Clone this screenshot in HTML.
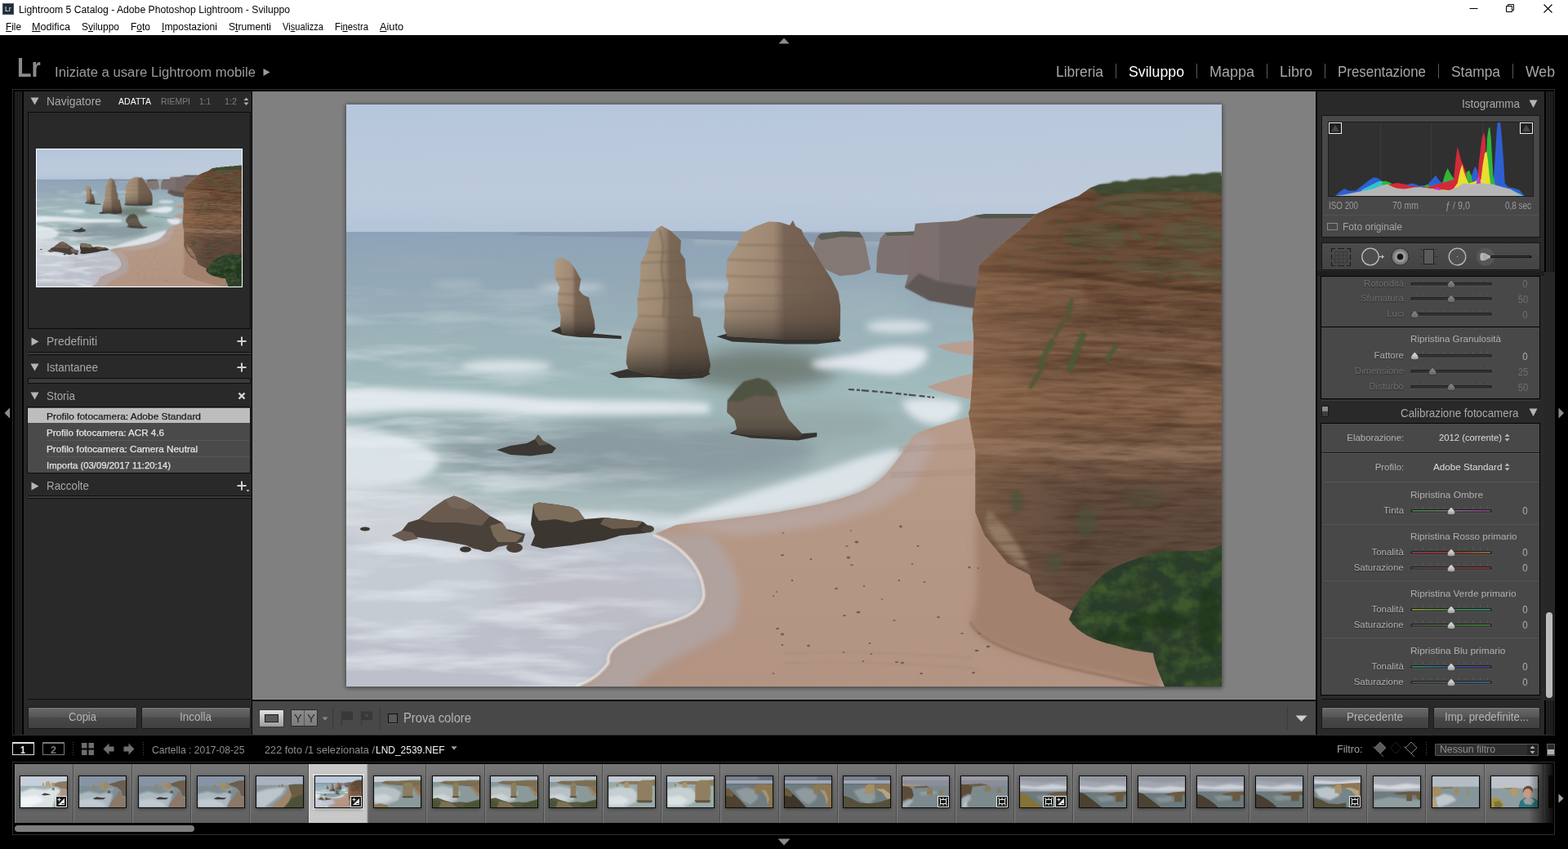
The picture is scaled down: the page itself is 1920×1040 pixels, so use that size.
<!DOCTYPE html>
<html lang="it"><head><meta charset="utf-8"><title>Lightroom 5 Catalog - Adobe Photoshop Lightroom - Sviluppo</title>
<style>
html,body{margin:0;padding:0;background:#000;}
body{width:1920px;height:1040px;position:relative;overflow:hidden;font-family:"Liberation Sans","DejaVu Sans",sans-serif;-webkit-font-smoothing:antialiased;}
span{display:block}
.abs{position:absolute}
</style></head><body>
<svg width="0" height="0" style="position:absolute">
<defs>
<linearGradient id="gSky" x1="0" y1="128" x2="0" y2="290" gradientUnits="userSpaceOnUse"><stop offset="0" stop-color="#b6c6db"/><stop offset=".7" stop-color="#bccadb"/><stop offset="1" stop-color="#b3c4d8"/></linearGradient>
<linearGradient id="gSkyR" x1="424" y1="0" x2="1496" y2="0" gradientUnits="userSpaceOnUse"><stop offset="0" stop-color="#c8d2dc" stop-opacity="0"/><stop offset=".55" stop-color="#c8d2dc" stop-opacity=".08"/><stop offset="1" stop-color="#c8d2dc" stop-opacity=".15"/></linearGradient>
<linearGradient id="gSea" x1="0" y1="284" x2="0" y2="841" gradientUnits="userSpaceOnUse"><stop offset="0" stop-color="#8ea3b8"/><stop offset=".12" stop-color="#94a9b6"/><stop offset=".25" stop-color="#9cb4ba"/><stop offset=".34" stop-color="#a0babc"/><stop offset=".45" stop-color="#9eb5b6"/><stop offset=".6" stop-color="#a8babc"/><stop offset=".8" stop-color="#bac5ca"/><stop offset="1" stop-color="#c4c9d0"/></linearGradient>
<linearGradient id="gSand" x1="0" y1="420" x2="0" y2="841" gradientUnits="userSpaceOnUse"><stop offset="0" stop-color="#bb9e8e"/><stop offset=".5" stop-color="#b69886"/><stop offset="1" stop-color="#b39483"/></linearGradient>
<linearGradient id="gCliff" x1="0" y1="220" x2="0" y2="800" gradientUnits="userSpaceOnUse"><stop offset="0" stop-color="#6c4e38"/><stop offset=".2" stop-color="#6e503a"/><stop offset=".235" stop-color="#7a5a44"/><stop offset=".34" stop-color="#6a4e3c"/><stop offset=".48" stop-color="#86644b"/><stop offset=".6" stop-color="#705645"/><stop offset=".8" stop-color="#624e40"/><stop offset="1" stop-color="#685242"/></linearGradient>
<linearGradient id="gCliffL" x1="1186" y1="0" x2="1320" y2="0" gradientUnits="userSpaceOnUse"><stop offset="0" stop-color="#a07858" stop-opacity=".42"/><stop offset=".5" stop-color="#a07858" stop-opacity=".2"/><stop offset="1" stop-color="#a07858" stop-opacity="0"/></linearGradient>
<linearGradient id="gSt2" x1="766" y1="0" x2="870" y2="0" gradientUnits="userSpaceOnUse">
<stop offset="0" stop-color="#b9a180"/><stop offset=".45" stop-color="#c4aa86"/><stop offset=".62" stop-color="#a88c6a"/><stop offset="1" stop-color="#b09470"/></linearGradient>
<linearGradient id="gSt3" x1="887" y1="0" x2="1030" y2="0" gradientUnits="userSpaceOnUse">
<stop offset="0" stop-color="#b49a78"/><stop offset=".4" stop-color="#c0a480"/><stop offset="1" stop-color="#a88a66"/></linearGradient>
<linearGradient id="gDark" x1="0" y1="0" x2="0" y2="1"><stop offset="0" stop-color="#000" stop-opacity="0"/><stop offset="1" stop-color="#2a2018" stop-opacity=".55"/></linearGradient>
<filter id="tb" x="-20%" y="-20%" width="140%" height="140%"><feGaussianBlur stdDeviation="1.1"/></filter>
<filter id="b1" x="-20%" y="-20%" width="140%" height="140%"><feGaussianBlur stdDeviation="1"/></filter>
<filter id="b2" x="-20%" y="-20%" width="140%" height="140%"><feGaussianBlur stdDeviation="2.5"/></filter>
<filter id="b4" x="-30%" y="-30%" width="160%" height="160%"><feGaussianBlur stdDeviation="5"/></filter>
<filter id="b8" x="-30%" y="-30%" width="160%" height="160%"><feGaussianBlur stdDeviation="10"/></filter>

<linearGradient id="gLow" x1="0" y1="0" x2="0" y2="1"><stop offset="0" stop-color="#3c342c" stop-opacity="0"/><stop offset=".6" stop-color="#3c342c" stop-opacity=".05"/><stop offset=".8" stop-color="#3c342c" stop-opacity=".3"/><stop offset=".93" stop-color="#2e2a26" stop-opacity=".62"/><stop offset="1" stop-color="#2a2622" stop-opacity=".85"/></linearGradient>
<linearGradient id="gSide" x1="0" y1="0" x2="1" y2="0"><stop offset="0" stop-color="#ffe8c4" stop-opacity=".3"/><stop offset=".42" stop-color="#ffe8c4" stop-opacity=".16"/><stop offset=".52" stop-color="#2a2018" stop-opacity=".2"/><stop offset="1" stop-color="#2a2018" stop-opacity=".3"/></linearGradient>
<filter id="fFoam" x="0" y="0" width="100%" height="100%" color-interpolation-filters="sRGB"><feTurbulence type="fractalNoise" baseFrequency="0.007 0.045" numOctaves="4" seed="11"/><feColorMatrix type="matrix" values="0 0 0 0 .92  0 0 0 0 .94  0 0 0 0 .96  3.2 0 0 0 -1.45"/><feGaussianBlur stdDeviation=".7"/></filter>
<filter id="fRock" x="0" y="0" width="100%" height="100%" color-interpolation-filters="sRGB"><feTurbulence type="fractalNoise" baseFrequency="0.02 0.16" numOctaves="4" seed="5"/><feColorMatrix type="matrix" values="0 0 0 0 .18  0 0 0 0 .1  0 0 0 0 .04  2.4 0 0 0 -1.0"/></filter>
<filter id="fRockL" x="0" y="0" width="100%" height="100%" color-interpolation-filters="sRGB"><feTurbulence type="fractalNoise" baseFrequency="0.02 0.16" numOctaves="4" seed="23"/><feColorMatrix type="matrix" values="0 0 0 0 .66  0 0 0 0 .5  0 0 0 0 .38  2.2 0 0 0 -1.05"/></filter>
<filter id="fBush" x="0" y="0" width="100%" height="100%" color-interpolation-filters="sRGB"><feTurbulence type="fractalNoise" baseFrequency="0.05 0.06" numOctaves="3" seed="8"/><feColorMatrix type="matrix" values="0 0 0 0 .27  0 0 0 0 .38  0 0 0 0 .18  2.6 0 0 0 -1.0"/></filter>
<radialGradient id="gFoamMask" cx="424" cy="800" r="600" gradientUnits="userSpaceOnUse"><stop offset="0" stop-color="#8c8c8c"/><stop offset=".45" stop-color="#8c8c8c"/><stop offset=".7" stop-color="#3a3a3a"/><stop offset="1" stop-color="#0c0c0c"/></radialGradient>
<mask id="mFoam" maskUnits="userSpaceOnUse" x="424" y="284" width="1072" height="560"><rect x="424" y="284" width="1072" height="560" fill="url(#gFoamMask)"/><rect x="424" y="284" width="1072" height="60" fill="#000" opacity=".8"/></mask>
<path id="pCliff" d="M1496,216 L1456,220 L1413,221.500 L1384,224.500 L1347,226 L1335,230 L1321,240 L1298,249 L1269,262 L1249,281 L1226,299.500 L1206,318 L1199,325.500 L1197,344 L1192.500,373 L1190.500,390 L1192.500,416 L1191,460 L1188,500 L1186,506 L1190,530 L1194.500,553 L1194.500,628 L1206,656 L1234,690 L1261,704 L1268,724 L1302,742 L1320,752 L1380,760 L1496,760Z"/>
<clipPath id="cpCliff"><use href="#pCliff"/></clipPath>
<path id="pS1" d="M680.200,317.700 L688.800,315.700 L697.500,320.600 L703.300,327.800 L709,337.900 L711.300,342.200 L709,355.200 L713.400,360.900 L721.100,364.400 L724,378.200 L727.800,392.700 L728.600,402.800 L725.800,408.500 L709,411.400 L688.800,408.500 L686,399.900 L686.800,386.900 L683.100,372.500 L683.600,359.500 L685.400,352.300 L680.800,342.200 L679,337.900 L679.600,326.300Z"/>
<path id="pS2" d="M810,276.400 L804.200,280.200 L795.500,291.700 L791.200,309 L784.600,322 L784,343.600 L780.500,366.700 L781.100,386.900 L773.900,404.200 L768.100,424.400 L766.700,444.600 L769.600,453 L795.500,459 L833,461 L867.600,458 L870,447.500 L866.200,427.300 L861.900,410 L857.500,389.800 L848.900,386.900 L847.500,360.900 L840.200,343.600 L838.800,317.700 L833,309 L833.900,294.600 L821.500,283.100Z"/>
<path id="pS3" d="M941.200,271.500 L925.300,277.300 L908.600,286 L907.400,291.700 L902.200,300.400 L890.700,317.700 L889.300,337.900 L892.200,346.500 L890.700,358 L886.400,362.400 L887.800,381.100 L886.400,401.300 L890.700,412 L962.800,416 L1026.300,415 L1028.600,410 L1029.100,375.400 L1026.300,358 L1017.600,340.700 L1006.100,323.400 L994.500,303.300 L984.400,288.800 L981.600,281.600 L974.300,277.300 L970.900,270.100 L967.100,275.900 L954.200,272.100Z"/>
<path id="pS4" d="M928.200,463.300 L910.900,467.600 L902.200,476.300 L890.700,490.700 L890.100,505.100 L899.400,513.800 L902.200,525.300 L898,531 L919.600,533 L977.200,536 L983,532.500 L965.700,513.800 L957,496.500 L951.300,479.200 L939.700,466.200Z"/>
<clipPath id="cpPhoto"><rect x="424" y="128" width="1072" height="713"/></clipPath>
</defs>
<symbol id="ph" viewBox="424 128 1072 713" preserveAspectRatio="none">
<g clip-path="url(#cpPhoto)">
<rect x="424" y="128" width="1072" height="160" fill="url(#gSky)"/>
<rect x="424" y="128" width="1072" height="160" fill="url(#gSkyR)"/>
<!-- sea -->
<rect x="424" y="284" width="1072" height="560" fill="url(#gSea)"/>
<rect x="850" y="284" width="400" height="16" fill="#aab7c0" opacity=".55" filter="url(#b2)"/>
<!-- distant headland -->
<polygon points="627,287 640,284.500 700,284.500 760,283.500 830,283 908,283.500 1010,286 1010,297 908,295 830,292 760,290.500 700,289.500 640,288.500" fill="#8898ac"/>
<!-- sea teal patches -->
<g filter="url(#b8)">
<ellipse cx="590" cy="432" rx="190" ry="34" fill="#9cb4b8" opacity=".5"/>
<ellipse cx="770" cy="555" rx="230" ry="38" fill="#88999f" opacity=".92"/>
<ellipse cx="930" cy="452" rx="95" ry="26" fill="#6e7a74" opacity=".9"/>
<ellipse cx="560" cy="525" rx="130" ry="14" fill="#98aeb2" opacity=".8"/>
<ellipse cx="1060" cy="375" rx="60" ry="26" fill="#9fb4bc" opacity=".6"/>
<ellipse cx="1010" cy="520" rx="80" ry="22" fill="#94a8a6" opacity=".8"/>
</g>
<!-- foam (soft shapes) -->
<g filter="url(#b4)" fill="#e8edf2">
<path d="M396,480 C480,474 560,478 640,486 C720,494 800,488 869,494 L869,506 C780,508 700,510 620,506 C540,500 470,504 396,510Z" opacity=".9"/>
<path d="M396,520 C470,522 520,540 537,560 C540,585 500,600 396,606Z" opacity=".8"/>
<ellipse cx="620" cy="449" rx="56" ry="8" opacity=".8"/>
<path d="M992,444 C1010,436 1040,438 1056,432 C1080,424 1110,422 1134,428 C1140,440 1130,452 1100,458 C1070,460 1050,452 1030,452 C1010,454 996,452 992,444Z" opacity=".92"/>
<path d="M1104,492 C1120,486 1150,486 1176,492 C1180,504 1170,516 1150,520 C1130,520 1112,512 1104,492Z" opacity=".88"/>
<path d="M800,648 C880,610 990,585 1050,562 C1080,552 1100,548 1110,552 C1095,585 1060,605 1000,620 C940,634 860,642 800,648Z" opacity=".8"/>
<ellipse cx="720" cy="640" rx="120" ry="12" opacity=".6"/>
<ellipse cx="700" cy="352" rx="42" ry="3.500" opacity=".65"/>
<ellipse cx="870" cy="349" rx="32" ry="3" opacity=".6"/>
<ellipse cx="560" cy="349" rx="30" ry="2.500" opacity=".45"/>
<ellipse cx="880" cy="372" rx="30" ry="3" opacity=".5"/>
<ellipse cx="1100" cy="400" rx="40" ry="8" opacity=".75"/>
</g>
<!-- bottom-left foam wash -->
<g filter="url(#b8)">
<path d="M396,600 C500,596 560,600 620,640 C700,660 800,650 850,670 C880,700 870,760 760,800 L712,872 L396,872Z" fill="#bbc0ca" opacity=".96"/>
<ellipse cx="500" cy="720" rx="120" ry="60" fill="#d6dce2" opacity=".35"/>
<ellipse cx="720" cy="740" rx="110" ry="40" fill="#bdbbc3" opacity=".6"/><ellipse cx="485" cy="630" rx="95" ry="38" fill="#dce2e8" opacity=".55"/>
</g>
<!-- textured foam streaks -->
<g mask="url(#mFoam)"><rect x="424" y="284" width="1072" height="560" filter="url(#fFoam)"/></g>
<rect x="1010" y="285" width="112" height="11" fill="#8c9cae" opacity=".9"/>
<!-- distant cliffs -->
<polygon points="996,303 999,292 1005,286 1030,283.500 1052,284 1058,292 1060,300 1066,330 1050,336 1028,338 1011,330 1000,318" fill="#847874"/>
<polygon points="1001,290 1005,286 1030,283.500 1052,284 1057,291 1030,290 1006,294" fill="#5a5e56"/>
<polygon points="1073,334 1074,310 1078,292 1084,285 1120,283.500 1122,336 1100,337" fill="#7e7270"/>
<polygon points="1084,285 1120,283.500 1121,288 1086,289" fill="#5c5e54"/>
<polygon points="1121,274 1150,272 1173,270.500 1193,264 1207,262 1269,262 1249,281 1226,299.500 1206,318 1199,325.500 1197,344 1196,378 1160,372 1138,368 1108,352 1113,334 1117,300" fill="#766a68"/>
<polygon points="1121,274 1150,272 1150,345 1138,368 1108,352 1113,334 1117,300" fill="#807472" opacity=".7"/>
<polygon points="1108,352 1125,335 1150,345 1196,352 1196,378 1160,372 1138,368" fill="#5a5250" opacity=".8" filter="url(#b1)"/>
<polygon points="1193,264 1207,262 1269,262 1262,267 1200,267.500" fill="#54544a"/>
<!-- upper beach sand -->
<path d="M1196,417 C1176,419 1160,420 1147,424 C1160,432 1180,434 1196,436Z" fill="#b89e90"/>
<path d="M1196,456 C1170,462 1150,468 1135,474 C1150,480 1170,486 1196,490Z" fill="#b89e90"/>
<!-- main sand -->
<path d="M1196,508 C1160,518 1132,525 1119,533 C1110,548 1100,562 1092,572 C1080,588 1066,598 1050,604 C1010,618 980,622 949,628 C900,636 850,640 828,643 L800,655 C840,670 862,700 862,730 C858,756 820,762 790,772 C760,785 742,795 745,812 C735,826 720,836 705,841 L1496,841 L1496,720 L1196,600Z" fill="url(#gSand)"/>
<!-- wet sand -->
<g filter="url(#b4)">
<path d="M800,655 C840,670 862,700 862,730 C858,756 820,762 790,772 C760,785 742,795 745,812 C735,826 720,836 690,866 L760,866 C790,812 850,800 895,770 C915,730 905,690 870,655Z" fill="#b0a2a0" opacity=".95"/>
<path d="M1119,533 C1100,562 1080,588 1050,604 C1010,618 980,622 949,628 L828,643 L900,656 C1000,650 1080,630 1118,595 C1130,572 1138,556 1148,536Z" fill="#b8a8a4" opacity=".8"/>
<path d="M1196,640 C1190,680 1205,720 1188,760 C1190,785 1240,800 1300,815 C1350,826 1390,834 1420,841 L1440,780 L1300,700 L1200,600Z" fill="#9f7e6a" opacity=".85"/>
</g>
<path d="M800,655 C840,670 862,700 862,730 C858,756 820,762 790,772 C760,785 742,795 745,812 C735,826 720,836 705,841" fill="none" stroke="#f4f2f0" stroke-width="2.500" opacity=".9" filter="url(#b1)"/>
<g fill="#5a4a42" opacity=".75"><ellipse cx="1037" cy="669" rx="2.1" ry="0.8"/><ellipse cx="1101" cy="711" rx="1.3" ry="1.1"/><ellipse cx="951" cy="725" rx="1.3" ry="0.8"/><ellipse cx="1067" cy="801" rx="1.4" ry="0.9"/><ellipse cx="1128" cy="825" rx="2.0" ry="1.0"/><ellipse cx="1198" cy="696" rx="1.4" ry="0.8"/><ellipse cx="1033" cy="799" rx="1.5" ry="1.1"/><ellipse cx="1132" cy="713" rx="2.0" ry="0.7"/><ellipse cx="958" cy="680" rx="2.2" ry="1.0"/><ellipse cx="1034" cy="754" rx="1.8" ry="0.9"/><ellipse cx="1178" cy="776" rx="1.5" ry="1.1"/><ellipse cx="1098" cy="811" rx="2.2" ry="0.9"/><ellipse cx="1065" cy="788" rx="1.4" ry="1.0"/><ellipse cx="952" cy="770" rx="2.3" ry="1.1"/><ellipse cx="1149" cy="756" rx="2.0" ry="1.0"/><ellipse cx="1192" cy="824" rx="1.9" ry="1.2"/><ellipse cx="958" cy="777" rx="2.1" ry="1.4"/><ellipse cx="1187" cy="695" rx="1.7" ry="1.2"/><ellipse cx="947" cy="730" rx="1.4" ry="0.8"/><ellipse cx="958" cy="790" rx="1.4" ry="0.9"/><ellipse cx="1057" cy="810" rx="1.3" ry="1.0"/><ellipse cx="1105" cy="812" rx="2.3" ry="1.3"/><ellipse cx="1024" cy="721" rx="1.7" ry="1.3"/><ellipse cx="993" cy="685" rx="1.5" ry="1.0"/><ellipse cx="1117" cy="691" rx="1.2" ry="1.0"/><ellipse cx="1051" cy="750" rx="2.5" ry="1.2"/><ellipse cx="1095" cy="760" rx="2.1" ry="0.7"/><ellipse cx="1210" cy="792" rx="2.4" ry="1.3"/><ellipse cx="1058" cy="718" rx="1.3" ry="1.1"/><ellipse cx="959" cy="653" rx="1.5" ry="0.8"/><ellipse cx="1042" cy="650" rx="1.2" ry="0.8"/><ellipse cx="970" cy="711" rx="1.2" ry="1.3"/><ellipse cx="1124" cy="669" rx="1.6" ry="0.9"/><ellipse cx="1049" cy="664" rx="2.4" ry="1.4"/><ellipse cx="1080" cy="734" rx="1.3" ry="0.8"/><ellipse cx="1043" cy="692" rx="2.4" ry="0.8"/><ellipse cx="947" cy="825" rx="1.9" ry="0.8"/><ellipse cx="1103" cy="645" rx="1.9" ry="1.4"/><ellipse cx="1199" cy="776" rx="1.6" ry="1.0"/><ellipse cx="990" cy="791" rx="1.9" ry="1.2"/><ellipse cx="1039" cy="683" rx="2.3" ry="1.4"/><ellipse cx="1196" cy="797" rx="2.3" ry="1.2"/></g><g stroke="#a48876" stroke-width="1.300" fill="none" opacity=".6" filter="url(#b1)"><path d="M1100,548 L1192,545"/><path d="M1100,552 L1192,549"/><path d="M1090,580 L1194,576"/><path d="M1090,584 L1194,580"/><path d="M960,800 C1040,798 1120,800 1190,806"/><path d="M960,812 C1040,810 1120,812 1200,820"/></g>
<path d="M1188,762 C1200,786 1240,800 1300,816 C1350,828 1390,836 1420,842" stroke="#8a6a58" stroke-width="2.500" fill="none" opacity=".7" filter="url(#b1)"/>
<!-- main cliff -->
<use href="#pCliff" fill="url(#gCliff)"/>
<g clip-path="url(#cpCliff)">
<!-- top slope -->
<path d="M1496,210 L1300,240 L1199,325.500 C1269,326 1327,333 1384,343 C1430,350 1470,353 1496,353Z" fill="#6a4c38"/>
<g filter="url(#b2)" fill="#5a5c42" opacity=".5">
<ellipse cx="1400" cy="250" rx="60" ry="14"/><ellipse cx="1460" cy="290" rx="40" ry="20"/><ellipse cx="1340" cy="290" rx="40" ry="16"/><ellipse cx="1420" cy="325" rx="50" ry="10"/><ellipse cx="1480" cy="335" rx="24" ry="9"/>
</g>
<path d="M1335,230 L1347,226 L1384,224.500 L1413,221.500 L1456,220 L1496,216 L1496,238 C1450,232 1400,234 1350,240Z" fill="#414e34" opacity=".95" filter="url(#b1)"/>
<!-- band structure -->
<g filter="url(#b1)">
<path d="M1199,325 C1269,326 1327,333 1384,343 C1430,350 1470,353 1496,353 L1496,358 C1470,358 1430,356 1384,349 C1327,340 1269,333 1198,333Z" fill="#4e3626" opacity=".75"/>
<path d="M1197,340 C1270,338 1340,345 1400,354 C1440,360 1470,362 1496,362 L1496,380 C1440,378 1340,366 1196,368Z" fill="#7a5a44" opacity=".3"/><path d="M1330,350 C1390,356 1450,362 1496,362 L1496,392 C1450,390 1390,384 1330,380Z" fill="#4e3626" opacity=".3" filter="url(#b2)"/>
<path d="M1194,384 C1280,380 1380,388 1496,398 L1496,404 C1380,396 1280,388 1194,391Z" fill="#5a4030" opacity=".5"/>
<path d="M1193,408 C1280,404 1380,410 1496,420 L1496,438 C1380,428 1280,424 1192,428Z" fill="#8c6a52" opacity=".5"/>
<path d="M1192,440 C1280,438 1380,442 1496,450 L1496,457 C1380,450 1280,446 1192,448Z" fill="#5a4030" opacity=".5"/>
<path d="M1190,470 C1280,468 1380,472 1496,478 L1496,496 C1380,490 1280,486 1190,488Z" fill="#8e6c54" opacity=".5"/>
<path d="M1188,512 C1280,516 1380,522 1496,520 L1496,528 C1380,530 1280,524 1188,520Z" fill="#5a4030" opacity=".45"/>
<path d="M1190,536 C1280,542 1380,550 1496,546 L1496,566 C1380,570 1280,562 1192,556Z" fill="#9a7c66" opacity=".6"/>
</g>
<g fill="none" filter="url(#b1)"><path d="M1186,345.7 C1280,343.7 1380,351.7 1496,361.7" stroke="#4e3424" stroke-width="1.4" opacity="0.40"/><path d="M1186,353.4 C1280,351.4 1380,359.4 1496,369.4" stroke="#b08a66" stroke-width="1.7" opacity="0.23"/><path d="M1186,361.3 C1280,359.3 1380,367.3 1496,377.3" stroke="#4e3424" stroke-width="1.4" opacity="0.22"/><path d="M1186,368.1 C1280,366.1 1380,374.1 1496,384.1" stroke="#b08a66" stroke-width="0.9" opacity="0.37"/><path d="M1186,376.9 C1280,374.9 1380,382.9 1496,392.9" stroke="#4e3424" stroke-width="1.4" opacity="0.28"/><path d="M1186,385.8 C1280,383.8 1380,391.8 1496,401.8" stroke="#4e3424" stroke-width="1.4" opacity="0.22"/><path d="M1186,395.8 C1280,393.8 1380,401.8 1496,411.8" stroke="#4e3424" stroke-width="0.9" opacity="0.19"/><path d="M1186,404.4 C1280,402.4 1380,410.4 1496,420.4" stroke="#b08a66" stroke-width="1.6" opacity="0.26"/><path d="M1186,414.5 C1280,412.5 1380,420.5 1496,430.5" stroke="#4e3424" stroke-width="1.3" opacity="0.33"/><path d="M1186,419.5 C1280,417.5 1380,425.5 1496,435.5" stroke="#4e3424" stroke-width="0.9" opacity="0.34"/><path d="M1186,430.5 C1280,428.5 1380,436.5 1496,446.5" stroke="#b08a66" stroke-width="1.8" opacity="0.38"/><path d="M1186,437.0 C1280,435.0 1380,443.0 1496,453.0" stroke="#4e3424" stroke-width="1.6" opacity="0.30"/><path d="M1186,442.4 C1280,440.4 1380,448.4 1496,458.4" stroke="#4e3424" stroke-width="1.6" opacity="0.28"/><path d="M1186,449.8 C1280,447.8 1380,455.8 1496,465.8" stroke="#4e3424" stroke-width="1.8" opacity="0.38"/><path d="M1186,456.0 C1280,454.0 1380,461.0 1496,466.0" stroke="#4e3424" stroke-width="1.7" opacity="0.19"/><path d="M1186,466.9 C1280,464.9 1380,471.9 1496,476.9" stroke="#b08a66" stroke-width="1.2" opacity="0.20"/><path d="M1186,473.1 C1280,471.1 1380,478.1 1496,483.1" stroke="#4e3424" stroke-width="1.5" opacity="0.26"/><path d="M1186,480.1 C1280,478.1 1380,485.1 1496,490.1" stroke="#4e3424" stroke-width="1.8" opacity="0.36"/><path d="M1186,485.9 C1280,483.9 1380,490.9 1496,495.9" stroke="#4e3424" stroke-width="1.5" opacity="0.18"/><path d="M1186,495.7 C1280,493.7 1380,500.7 1496,505.7" stroke="#4e3424" stroke-width="1.0" opacity="0.31"/><path d="M1186,503.7 C1280,501.7 1380,508.7 1496,513.7" stroke="#4e3424" stroke-width="1.8" opacity="0.36"/><path d="M1186,512.6 C1280,510.6 1380,517.6 1496,522.6" stroke="#4e3424" stroke-width="0.9" opacity="0.28"/><path d="M1186,517.6 C1280,515.6 1380,522.6 1496,527.6" stroke="#b08a66" stroke-width="1.7" opacity="0.41"/><path d="M1186,524.4 C1280,522.4 1380,529.4 1496,534.4" stroke="#4e3424" stroke-width="1.7" opacity="0.23"/><path d="M1186,535.4 C1280,533.4 1380,540.4 1496,545.4" stroke="#4e3424" stroke-width="1.4" opacity="0.32"/><path d="M1186,546.3 C1280,544.3 1380,551.3 1496,556.3" stroke="#b08a66" stroke-width="1.0" opacity="0.24"/><path d="M1186,553.3 C1280,551.3 1380,558.3 1496,563.3" stroke="#4e3424" stroke-width="1.1" opacity="0.20"/><path d="M1186,559.6 C1280,557.6 1380,564.6 1496,569.6" stroke="#4e3424" stroke-width="1.4" opacity="0.18"/><path d="M1186,566.8 C1280,564.8 1380,571.8 1496,576.8" stroke="#4e3424" stroke-width="1.3" opacity="0.41"/><path d="M1186,576.8 C1280,574.8 1380,581.8 1496,586.8" stroke="#b08a66" stroke-width="0.9" opacity="0.27"/><path d="M1186,582.7 C1280,580.7 1380,587.7 1496,592.7" stroke="#4e3424" stroke-width="1.7" opacity="0.38"/><path d="M1186,592.1 C1280,590.1 1380,597.1 1496,602.1" stroke="#b08a66" stroke-width="1.0" opacity="0.33"/></g>
<g fill="#565c40" filter="url(#b1)" opacity=".7"><ellipse cx="1462" cy="302" rx="4.0" ry="1.7"/><ellipse cx="1278" cy="314" rx="3.4" ry="2.9"/><ellipse cx="1381" cy="262" rx="3.1" ry="2.7"/><ellipse cx="1370" cy="333" rx="4.7" ry="2.0"/><ellipse cx="1472" cy="251" rx="2.6" ry="2.0"/><ellipse cx="1374" cy="242" rx="3.8" ry="3.0"/><ellipse cx="1490" cy="308" rx="4.9" ry="2.5"/><ellipse cx="1348" cy="318" rx="3.6" ry="3.2"/><ellipse cx="1421" cy="339" rx="5.1" ry="2.7"/><ellipse cx="1437" cy="341" rx="3.7" ry="2.7"/><ellipse cx="1468" cy="336" rx="4.0" ry="2.8"/><ellipse cx="1457" cy="298" rx="4.7" ry="2.1"/><ellipse cx="1377" cy="302" rx="2.8" ry="2.6"/><ellipse cx="1494" cy="337" rx="5.0" ry="2.2"/><ellipse cx="1420" cy="299" rx="4.0" ry="2.9"/><ellipse cx="1234" cy="320" rx="2.6" ry="2.5"/><ellipse cx="1348" cy="254" rx="4.9" ry="2.3"/><ellipse cx="1296" cy="311" rx="3.2" ry="1.8"/><ellipse cx="1469" cy="309" rx="4.0" ry="3.0"/><ellipse cx="1304" cy="310" rx="3.2" ry="2.2"/><ellipse cx="1441" cy="341" rx="5.6" ry="2.2"/><ellipse cx="1377" cy="265" rx="3.0" ry="2.3"/><ellipse cx="1449" cy="333" rx="5.0" ry="3.1"/><ellipse cx="1339" cy="260" rx="3.2" ry="2.2"/><ellipse cx="1389" cy="288" rx="3.6" ry="2.9"/><ellipse cx="1491" cy="282" rx="2.8" ry="1.6"/><ellipse cx="1460" cy="230" rx="5.0" ry="2.5"/><ellipse cx="1298" cy="326" rx="2.6" ry="1.7"/><ellipse cx="1447" cy="255" rx="3.0" ry="1.6"/><ellipse cx="1390" cy="282" rx="4.7" ry="2.6"/><ellipse cx="1406" cy="250" rx="4.2" ry="1.8"/><ellipse cx="1414" cy="248" rx="3.5" ry="2.1"/><ellipse cx="1409" cy="291" rx="4.7" ry="2.8"/><ellipse cx="1323" cy="326" rx="5.7" ry="1.6"/><ellipse cx="1477" cy="317" rx="3.0" ry="2.3"/><ellipse cx="1318" cy="297" rx="5.6" ry="2.9"/><ellipse cx="1480" cy="284" rx="4.8" ry="1.8"/><ellipse cx="1416" cy="329" rx="4.7" ry="2.7"/><ellipse cx="1364" cy="325" rx="3.6" ry="3.0"/><ellipse cx="1455" cy="269" rx="2.8" ry="2.2"/><ellipse cx="1367" cy="323" rx="4.2" ry="1.5"/><ellipse cx="1441" cy="233" rx="5.3" ry="1.8"/><ellipse cx="1306" cy="325" rx="3.0" ry="1.8"/><ellipse cx="1358" cy="317" rx="5.4" ry="2.7"/><ellipse cx="1480" cy="288" rx="5.8" ry="1.6"/><ellipse cx="1273" cy="292" rx="3.5" ry="2.7"/><ellipse cx="1393" cy="291" rx="5.5" ry="2.5"/><ellipse cx="1299" cy="273" rx="5.5" ry="3.0"/><ellipse cx="1487" cy="292" rx="4.5" ry="1.8"/><ellipse cx="1363" cy="289" rx="4.6" ry="1.5"/><ellipse cx="1487" cy="291" rx="3.9" ry="2.9"/><ellipse cx="1371" cy="287" rx="4.9" ry="1.6"/><ellipse cx="1364" cy="278" rx="5.8" ry="3.1"/><ellipse cx="1287" cy="285" rx="2.9" ry="2.2"/><ellipse cx="1443" cy="339" rx="4.2" ry="2.0"/><ellipse cx="1265" cy="303" rx="5.7" ry="1.7"/><ellipse cx="1406" cy="266" rx="3.7" ry="2.6"/><ellipse cx="1240" cy="318" rx="2.9" ry="2.4"/><ellipse cx="1362" cy="280" rx="3.8" ry="2.2"/><ellipse cx="1361" cy="245" rx="3.2" ry="2.6"/><ellipse cx="1393" cy="292" rx="5.5" ry="2.5"/><ellipse cx="1455" cy="255" rx="5.1" ry="2.9"/><ellipse cx="1468" cy="265" rx="3.6" ry="3.1"/><ellipse cx="1464" cy="242" rx="3.3" ry="2.7"/><ellipse cx="1448" cy="279" rx="5.3" ry="1.7"/><ellipse cx="1325" cy="312" rx="2.6" ry="1.8"/><ellipse cx="1487" cy="240" rx="4.3" ry="2.8"/><ellipse cx="1354" cy="312" rx="3.2" ry="1.6"/><ellipse cx="1368" cy="290" rx="4.5" ry="1.7"/><ellipse cx="1475" cy="237" rx="2.7" ry="3.1"/></g>
<!-- lower cliff dark zone -->
<path d="M1194,572 C1280,586 1380,598 1496,586 L1496,780 L1194,780Z" fill="#5c4a3e" opacity=".6" filter="url(#b4)"/>
<path d="M1210,625 C1230,640 1250,670 1262,700 C1240,690 1215,665 1206,640Z" fill="#a0907c" opacity=".7" filter="url(#b2)"/>
<!-- texture -->
<rect x="1180" y="210" width="320" height="560" filter="url(#fRock)" opacity=".32"/>
<rect x="1180" y="330" width="320" height="260" filter="url(#fRockL)" opacity=".3"/>
<!-- left edge shading -->
<use href="#pCliff" fill="url(#gCliffL)"/>
<!-- vegetation on cliff -->
<g filter="url(#b1)" stroke="#4c5a34" stroke-linecap="round" fill="none" opacity=".85">
<path d="M1312,368 L1306,392" stroke-width="5"/><path d="M1288,418 L1274,446" stroke-width="7"/><path d="M1278,448 L1262,474" stroke-width="5"/>
<path d="M1326,410 L1310,452" stroke-width="8"/><path d="M1366,424 L1356,440" stroke-width="6"/><path d="M1300,396 L1292,412" stroke-width="4"/>
</g>
<g filter="url(#b2)" fill="#4a5238" opacity=".6">
<ellipse cx="1330" cy="640" rx="12" ry="18"/><ellipse cx="1245" cy="615" rx="8" ry="14"/><ellipse cx="1290" cy="690" rx="10" ry="12"/><ellipse cx="1400" cy="610" rx="26" ry="12" opacity=".6"/>
</g>
</g>
<path d="M1340,230 C1346,224 1354,226 1360,224 C1366,220 1374,223 1380,222 C1388,217 1396,221 1404,219 C1412,215 1420,219 1428,217 C1436,213 1446,217 1454,215 C1462,211 1472,215 1480,212 C1486,210 1492,212 1496,211 L1496,222 L1340,234Z" fill="#3f4c32" filter="url(#b1)"/>
<!-- bushes bottom-right -->
<path id="pBush" d="M1309,759 C1315,740 1335,720 1347,708 C1358,695 1380,688 1415,677 C1440,672 1466,677 1480,674 L1496,668 L1496,841 L1426,841 C1422,830 1414,815 1412,800 C1395,798 1380,795 1364,790 C1340,785 1320,775 1309,759Z" fill="#2a3c2a"/>
<clipPath id="cpBush"><use href="#pBush"/></clipPath>
<g clip-path="url(#cpBush)"><rect x="1300" y="660" width="200" height="185" filter="url(#fBush)" opacity=".8"/>
<g filter="url(#b2)" fill="#1c3018" opacity=".6"><ellipse cx="1420" cy="760" rx="40" ry="10"/><ellipse cx="1370" cy="780" rx="30" ry="8"/><ellipse cx="1480" cy="760" rx="14" ry="40"/></g></g>
<!-- stack 1 -->
<polygon points="674.400,405.600 686,399.900 728.600,402.800 725.800,408.500 760.900,411.400 760.900,415.200 726.300,413.500 709,413 688.800,410.500" fill="#36322e"/>
<use href="#pS1" fill="#8e7866"/><use href="#pS1" fill="url(#gSide)"/><use href="#pS1" fill="url(#gLow)"/>
<!-- stack 2 -->
<polygon points="746.500,457.500 769.600,451.800 800,455 867.600,456 870,458 860,463 833,464.500 795.500,462 758,463" fill="#36322e"/>
<use href="#pS2" fill="#8f7a66"/><use href="#pS2" fill="url(#gSide)"/><use href="#pS2" fill="url(#gLow)"/>
<path d="M808,282 L812,300 L810,330 L814,360 L812,388" stroke="#6a5646" stroke-width="2.500" fill="none" opacity=".5" filter="url(#b1)"/>
<!-- stack 3 -->
<polygon points="877.700,412.300 890.700,408.500 962.800,414 1026.300,413 1030,418 1000,421.500 962.800,421.500 896.500,418.500" fill="#36322e"/>
<use href="#pS3" fill="#8c7664"/><use href="#pS3" fill="url(#gSide)"/><use href="#pS3" fill="url(#gLow)" opacity=".75"/>
<g stroke="#6a5848" stroke-width="1.500" opacity=".5" fill="none" filter="url(#b1)">
<path d="M903,300 L992,301"/><path d="M891,318 L1004,321"/><path d="M889,338 L1016,341"/><path d="M887,362 L1027,362"/><path d="M887,381 L1029,382"/>
<path d="M792,309 L833,309"/><path d="M785,322 L838,320"/><path d="M784,344 L840,344"/><path d="M781,367 L847,363"/><path d="M781,387 L857,389"/><path d="M774,404 L861,408"/>
<path d="M681,342 L711,342"/><path d="M683,360 L714,361"/><path d="M683,373 L723,376"/>
</g>
<path d="M1039,477 C1070,479 1100,482 1144,487" stroke="#3a3834" stroke-width="2.200" stroke-dasharray="7 3 4 2 9 4" fill="none" opacity=".85"/>
<!-- stack 4 -->
<polygon points="893.600,531.100 902.200,526 919.600,531 977.200,534 983,531 1000.300,530 1000.300,535 977.200,539.500 919.600,536.500" fill="#36322e"/>
<use href="#pS4" fill="#665c50"/><use href="#pS4" fill="url(#gLow)" opacity=".8"/>
<path d="M928.200,463.300 L910.900,467.600 L902.200,476.300 L890.700,490.700 L905,492 L925,484 L948,486 L951.300,479.200 L939.700,466.200Z" fill="#4e5240" opacity=".9" filter="url(#b1)"/>
<!-- flat dark rock -->
<polygon points="608,551 625,546 645,543 655,538 659,532.500 665,540 673,544 681,549 676,555 650,558.500 625,557" fill="#3a3734"/>
<polygon points="655,538 659,532.500 665,540 673,544 660,546" fill="#5a5248"/>
<!-- rock cluster -->
<polygon points="480,656 492,650 500,640 513,636 530,622 545,612 556,607.500 566,611 580,618 600,632 615,640 620,648 643,654 640,664 610,670 600,676 580,672 571,668 540,662 510,658 495,662" fill="#4a423a"/>
<polygon points="513,636 530,622 545,612 556,607.500 566,611 580,618 600,632 590,644 560,640 530,640" fill="#6a5a4e"/>
<polygon points="545,612 556,607.500 566,611 580,618 570,624 552,622" fill="#76665a"/>
<polygon points="600,644 615,640 622,650 640,656 632,664 610,664 604,656" fill="#786858"/>
<polygon points="650,642 653,618 660,615.500 680,618 700,621 708,625 716,636 740,634 760,636 787,639 800,649 790,653 760,656 740,662 700,668 665,672 650,668 655,656" fill="#3c3630"/>
<polygon points="653,618 660,615.500 680,618 700,621 708,625 716,636 700,640 680,636 660,638 655,630" fill="#7c6c5a"/>
<polygon points="740,634 760,636 787,639 780,646 750,648 735,642" fill="#6a5c4c"/>
<polygon points="480,656 492,650 505,652 512,660 495,663" fill="#6a5c50"/>
<ellipse cx="570" cy="673" rx="7" ry="3.500" fill="#3c3630"/><ellipse cx="596" cy="671" rx="9" ry="5" fill="#4a4038"/><ellipse cx="630" cy="671" rx="10" ry="6" fill="#4a4038"/><ellipse cx="793" cy="648" rx="8" ry="4.500" fill="#4a4038"/><ellipse cx="447" cy="648" rx="6" ry="2.500" fill="#3c3630"/>

</g>
</symbol>
</svg>

<div style="position:absolute;left:0px;top:0px;width:1920px;height:43px;background:#fff;"></div>
<div class="abs" style="left:3px;top:4px;width:14px;height:14px;background:#1f2d3a;border:1px solid #45545f;box-sizing:border-box"></div>
<span style="position:absolute;top:6.82px;font-size:9px;line-height:9px;height:9px;color:#e8eef4;white-space:nowrap;left:6.30px;transform:scaleX(0.9621);transform-origin:0 50%;">Lr</span>
<span style="position:absolute;top:6.16px;font-size:12px;line-height:12px;height:12px;color:#000;white-space:nowrap;left:23.00px;transform:scaleX(1.0157);transform-origin:0 50%;">Lightroom 5 Catalog - Adobe Photoshop Lightroom - Sviluppo</span>
<span style="position:absolute;top:27.16px;font-size:12px;line-height:12px;height:12px;color:#000;white-space:nowrap;left:7.00px;transform:scaleX(0.9826);transform-origin:0 50%;"><u>F</u>ile</span>
<span style="position:absolute;top:27.16px;font-size:12px;line-height:12px;height:12px;color:#000;white-space:nowrap;left:39.00px;transform:scaleX(1.0518);transform-origin:0 50%;"><u>M</u>odifica</span>
<span style="position:absolute;top:27.16px;font-size:12px;line-height:12px;height:12px;color:#000;white-space:nowrap;left:100.00px;transform:scaleX(0.9993);transform-origin:0 50%;">S<u>v</u>iluppo</span>
<span style="position:absolute;top:27.16px;font-size:12px;line-height:12px;height:12px;color:#000;white-space:nowrap;left:160.00px;transform:scaleX(0.9995);transform-origin:0 50%;">F<u>o</u>to</span>
<span style="position:absolute;top:27.16px;font-size:12px;line-height:12px;height:12px;color:#000;white-space:nowrap;left:198.00px;transform:scaleX(1.0094);transform-origin:0 50%;"><u>I</u>mpostazioni</span>
<span style="position:absolute;top:27.16px;font-size:12px;line-height:12px;height:12px;color:#000;white-space:nowrap;left:280.00px;transform:scaleX(1.0126);transform-origin:0 50%;">S<u>t</u>rumenti</span>
<span style="position:absolute;top:27.16px;font-size:12px;line-height:12px;height:12px;color:#000;white-space:nowrap;left:346.00px;transform:scaleX(0.9292);transform-origin:0 50%;">Vi<u>s</u>ualizza</span>
<span style="position:absolute;top:27.16px;font-size:12px;line-height:12px;height:12px;color:#000;white-space:nowrap;left:410.00px;transform:scaleX(0.9458);transform-origin:0 50%;">Fi<u>n</u>estra</span>
<span style="position:absolute;top:27.16px;font-size:12px;line-height:12px;height:12px;color:#000;white-space:nowrap;left:465.00px;transform:scaleX(1.0602);transform-origin:0 50%;"><u>A</u>iuto</span>
<svg class="abs" style="left:1780px;top:0" width="140" height="22" viewBox="1780 0 140 22"><path d="M1799.5 10.5H1809.5" stroke="#000" stroke-width="1" fill="none"/><path d="M1844.5 7.5h7v7h-7z M1846.5 7.5v-2h7v7h-2" stroke="#000" stroke-width="1" fill="none"/><path d="M1890.5 5.5l10 10M1900.5 5.5l-10 10" stroke="#000" stroke-width="1.1" fill="none"/></svg>
<span style="position:absolute;top:66.13px;font-size:33px;line-height:33px;height:33px;color:#8a8a8a;white-space:nowrap;font-weight:bold;left:20.80px;transform:scaleX(0.8697);transform-origin:0 50%;">Lr</span>
<span style="position:absolute;top:80.51px;font-size:16px;line-height:16px;height:16px;color:#9c9c9c;white-space:nowrap;left:67.00px;transform:scaleX(1.0438);transform-origin:0 50%;">Iniziate a usare Lightroom mobile</span>
<svg class="abs" style="left:322px;top:83px" width="10" height="11"><path d="M0.5 1L8.5 5.5L0.5 10Z" fill="#9c9c9c"/></svg>
<span style="position:absolute;top:79.23px;font-size:18px;line-height:18px;height:18px;color:#a6a6a6;white-space:nowrap;left:1293.00px;transform:scaleX(0.9661);transform-origin:0 50%;">Libreria</span>
<span style="position:absolute;top:79.23px;font-size:18px;line-height:18px;height:18px;color:#fff;white-space:nowrap;left:1382.00px;transform:scaleX(0.9848);transform-origin:0 50%;">Sviluppo</span>
<span style="position:absolute;top:79.23px;font-size:18px;line-height:18px;height:18px;color:#a6a6a6;white-space:nowrap;left:1481.00px;transform:scaleX(0.9993);transform-origin:0 50%;">Mappa</span>
<span style="position:absolute;top:79.23px;font-size:18px;line-height:18px;height:18px;color:#a6a6a6;white-space:nowrap;left:1567.00px;transform:scaleX(0.9993);transform-origin:0 50%;">Libro</span>
<span style="position:absolute;top:79.23px;font-size:18px;line-height:18px;height:18px;color:#a6a6a6;white-space:nowrap;left:1638.00px;transform:scaleX(0.9385);transform-origin:0 50%;">Presentazione</span>
<span style="position:absolute;top:79.23px;font-size:18px;line-height:18px;height:18px;color:#a6a6a6;white-space:nowrap;left:1777.00px;transform:scaleX(0.9672);transform-origin:0 50%;">Stampa</span>
<span style="position:absolute;top:79.23px;font-size:18px;line-height:18px;height:18px;color:#a6a6a6;white-space:nowrap;left:1868.00px;transform:scaleX(0.9813);transform-origin:0 50%;">Web</span>
<div style="position:absolute;left:1366px;top:78px;width:1px;height:18px;background:#5a5a5a;"></div>
<div style="position:absolute;left:1465px;top:78px;width:1px;height:18px;background:#5a5a5a;"></div>
<div style="position:absolute;left:1551px;top:78px;width:1px;height:18px;background:#5a5a5a;"></div>
<div style="position:absolute;left:1622px;top:78px;width:1px;height:18px;background:#5a5a5a;"></div>
<div style="position:absolute;left:1761px;top:78px;width:1px;height:18px;background:#5a5a5a;"></div>
<div style="position:absolute;left:1852px;top:78px;width:1px;height:18px;background:#5a5a5a;"></div>
<svg class="abs" style="left:953px;top:46px" width="14" height="8"><path d="M0.5 7.5L7 0.5L13.5 7.5Z" fill="#8c8c8c"/></svg>
<svg class="abs" style="left:952px;top:1027px" width="16" height="9"><path d="M0.5 0.5L8 8.5L15.5 0.5Z" fill="#8c8c8c"/></svg>
<svg class="abs" style="left:5px;top:499px" width="8" height="14"><path d="M7 0.5L0.5 7L7 13.5Z" fill="#8c8c8c"/></svg>
<svg class="abs" style="left:1908px;top:499px" width="8" height="14"><path d="M0.5 0.5L7 7L0.5 13.5Z" fill="#8c8c8c"/></svg>
<div class="abs" style="left:15px;top:109px;width:1889px;height:792px;border:1px solid #2d2d2d;box-sizing:border-box"></div>
<div style="position:absolute;left:16px;top:110px;width:1887px;height:2px;background:#000;"></div>
<div style="position:absolute;left:18px;top:112px;width:9px;height:788px;background:repeating-linear-gradient(90deg,#2a2a2a 0,#2a2a2a 1px,#111 1px,#111 2px);"></div>
<div style="position:absolute;left:1891px;top:333px;width:13px;height:525px;background:#272727;"></div>
<div style="position:absolute;left:1893px;top:112px;width:9px;height:221px;background:repeating-linear-gradient(90deg,#2a2a2a 0,#2a2a2a 1px,#111 1px,#111 2px);"></div>
<div style="position:absolute;left:1893px;top:858px;width:9px;height:42px;background:repeating-linear-gradient(90deg,#2a2a2a 0,#2a2a2a 1px,#111 1px,#111 2px);"></div>
<div style="position:absolute;left:29px;top:112px;width:279px;height:788px;background:#292929;"></div>
<svg class="abs" style="left:37px;top:119px" width="11" height="10"><path d="M0.5 0.5H10.5L5.5 9.5Z" fill="#b4b4b4"/></svg>
<span style="position:absolute;top:115.90px;font-size:15px;line-height:15px;height:15px;color:#a8a8a8;white-space:nowrap;left:57.00px;transform:scaleX(0.9236);transform-origin:0 50%;">Navigatore</span>
<span style="position:absolute;top:119.39px;font-size:10.5px;line-height:10.5px;height:10.5px;color:#ffffff;white-space:nowrap;left:145.00px;transform:scaleX(1.0034);transform-origin:0 50%;">ADATTA</span>
<span style="position:absolute;top:119.39px;font-size:10.5px;line-height:10.5px;height:10.5px;color:#7e7e7e;white-space:nowrap;left:197.00px;transform:scaleX(0.9953);transform-origin:0 50%;">RIEMPI</span>
<span style="position:absolute;top:119.39px;font-size:10.5px;line-height:10.5px;height:10.5px;color:#7e7e7e;white-space:nowrap;left:244.00px;transform:scaleX(0.9591);transform-origin:0 50%;">1:1</span>
<span style="position:absolute;top:119.39px;font-size:10.5px;line-height:10.5px;height:10.5px;color:#7e7e7e;white-space:nowrap;left:275.00px;transform:scaleX(1.0276);transform-origin:0 50%;">1:2</span>
<svg class="abs" style="left:298px;top:119px" width="7" height="11"><path d="M3.5 0.5L6.5 4H0.5ZM3.5 10L6.5 6.5H0.5Z" fill="#b0b0b0"/></svg>
<div class="abs" style="left:34px;top:137px;width:273px;height:266px;background:#292929;border:1px solid #0a0a0a;box-sizing:border-box"></div>
<div class="abs" style="left:44px;top:182px;width:253px;height:170px;background:#fff"></div>
<svg class="abs" style="left:45px;top:183px" width="251" height="168"><use href="#ph" x="0" y="0" width="251" height="168"/></svg>
<svg class="abs" style="left:38px;top:413px" width="10" height="11"><path d="M0.5 0.5V10.5L9.5 5.5Z" fill="#b4b4b4"/></svg>
<span style="position:absolute;top:409.89px;font-size:15px;line-height:15px;height:15px;color:#a8a8a8;white-space:nowrap;left:57.00px;transform:scaleX(0.9295);transform-origin:0 50%;">Predefiniti</span>
<svg class="abs" style="left:290px;top:412px" width="13" height="13"><path d="M6 0.500V11.500M0.500 6H11.500" stroke="#d0d0d0" stroke-width="2" fill="none"/></svg>
<div style="position:absolute;left:34px;top:431px;width:273px;height:1px;background:#0e0e0e;"></div>
<div style="position:absolute;left:34px;top:432px;width:273px;height:2px;background:#3a3a3a;"></div>
<div style="position:absolute;left:34px;top:434px;width:273px;height:1px;background:#0e0e0e;"></div>
<svg class="abs" style="left:37px;top:445px" width="11" height="10"><path d="M0.5 0.5H10.5L5.5 9.5Z" fill="#b4b4b4"/></svg>
<span style="position:absolute;top:441.89px;font-size:15px;line-height:15px;height:15px;color:#a8a8a8;white-space:nowrap;left:57.00px;transform:scaleX(0.8993);transform-origin:0 50%;">Istantanee</span>
<svg class="abs" style="left:290px;top:444px" width="13" height="13"><path d="M6 0.500V11.500M0.500 6H11.500" stroke="#d0d0d0" stroke-width="2" fill="none"/></svg>
<div class="abs" style="left:34px;top:463px;width:273px;height:7px;background:#3a3a3a;border:1px solid #0e0e0e;box-sizing:border-box"></div>
<svg class="abs" style="left:37px;top:480px" width="11" height="10"><path d="M0.5 0.5H10.5L5.5 9.5Z" fill="#b4b4b4"/></svg>
<span style="position:absolute;top:476.89px;font-size:15px;line-height:15px;height:15px;color:#a8a8a8;white-space:nowrap;left:57.00px;transform:scaleX(0.8932);transform-origin:0 50%;">Storia</span>
<svg class="abs" style="left:291px;top:480px" width="11" height="11"><path d="M1.500 1.500L8.500 8.500M8.500 1.500L1.500 8.500" stroke="#d8d8d8" stroke-width="2.300" fill="none"/></svg>
<div class="abs" style="left:33px;top:498px;width:274px;height:82px;background:#4a4a4a;border:1px solid #0e0e0e;box-sizing:border-box"></div>
<div style="position:absolute;left:34px;top:500px;width:272px;height:18px;background:#bdbdbd;"></div>
<span style="position:absolute;top:505.20px;font-size:11.5px;line-height:11.5px;height:11.5px;color:#1a1a1a;white-space:nowrap;left:57.00px;transform:scaleX(1.0373);transform-origin:0 50%;-webkit-text-stroke:0.25px #1a1a1a;">Profilo fotocamera: Adobe Standard</span>
<span style="position:absolute;top:525.20px;font-size:11.5px;line-height:11.5px;height:11.5px;color:#e4e4e4;white-space:nowrap;left:57.00px;transform:scaleX(1.0102);transform-origin:0 50%;-webkit-text-stroke:0.25px #e4e4e4;">Profilo fotocamera: ACR 4.6</span>
<span style="position:absolute;top:545.20px;font-size:11.5px;line-height:11.5px;height:11.5px;color:#e4e4e4;white-space:nowrap;left:57.00px;transform:scaleX(1.0228);transform-origin:0 50%;-webkit-text-stroke:0.25px #e4e4e4;">Profilo fotocamera: Camera Neutral</span>
<span style="position:absolute;top:565.20px;font-size:11.5px;line-height:11.5px;height:11.5px;color:#e4e4e4;white-space:nowrap;left:57.00px;transform:scaleX(0.9838);transform-origin:0 50%;-webkit-text-stroke:0.25px #e4e4e4;">Importa (03/09/2017 11:20:14)</span>
<div style="position:absolute;left:57px;top:539px;width:249px;height:1px;background:#565656;"></div>
<div style="position:absolute;left:57px;top:559px;width:249px;height:1px;background:#565656;"></div>
<svg class="abs" style="left:38px;top:590px" width="10" height="11"><path d="M0.5 0.5V10.5L9.5 5.5Z" fill="#b4b4b4"/></svg>
<span style="position:absolute;top:586.90px;font-size:15px;line-height:15px;height:15px;color:#a8a8a8;white-space:nowrap;left:57.00px;transform:scaleX(0.8910);transform-origin:0 50%;">Raccolte</span>
<svg class="abs" style="left:290px;top:589px" width="17" height="15"><path d="M6 0.500V11.500M0.500 6H11.500" stroke="#d0d0d0" stroke-width="2" fill="none"/><path d="M11.500 11h4l-2 2.500z" fill="#c8c8c8"/></svg>
<div style="position:absolute;left:34px;top:607px;width:273px;height:1px;background:#0e0e0e;"></div>
<div style="position:absolute;left:34px;top:608px;width:273px;height:2px;background:#3a3a3a;"></div>
<div style="position:absolute;left:34px;top:610px;width:273px;height:1px;background:#0e0e0e;"></div>
<div style="position:absolute;left:34px;top:856px;width:273px;height:1px;background:#0e0e0e;"></div>
<div class="abs" style="left:34px;top:866px;width:134px;height:27px;background:linear-gradient(#6a6a6a,#555 45%,#484848 50%,#404040);border:1px solid #1a1a1a;box-sizing:border-box;border-radius:2px;box-shadow:inset 0 1px 0 #7c7c7c"></div>
<div class="abs" style="left:173px;top:866px;width:134px;height:27px;background:linear-gradient(#6a6a6a,#555 45%,#484848 50%,#404040);border:1px solid #1a1a1a;box-sizing:border-box;border-radius:2px;box-shadow:inset 0 1px 0 #7c7c7c"></div>
<span style="position:absolute;top:869.70px;font-size:15px;line-height:15px;height:15px;color:#b4b4b4;white-space:nowrap;left:84.00px;transform:scaleX(0.8675);transform-origin:0 50%;">Copia</span>
<span style="position:absolute;top:869.70px;font-size:15px;line-height:15px;height:15px;color:#b4b4b4;white-space:nowrap;left:220.00px;transform:scaleX(0.8994);transform-origin:0 50%;">Incolla</span>
<div style="position:absolute;left:309px;top:112px;width:1302px;height:745px;background:#808080;"></div>
<div style="position:absolute;left:309px;top:856px;width:1302px;height:1px;background:#8e8e8e;"></div>
<div style="position:absolute;left:309px;top:857px;width:1302px;height:2px;background:#050505;"></div>
<div style="position:absolute;left:309px;top:859px;width:1302px;height:41px;background:#484848;"></div>
<div class="abs" style="left:424px;top:128px;width:1072px;height:713px;box-shadow:0 1px 5px 1px rgba(0,0,0,.45);background:#999"></div>
<svg class="abs" style="left:424px;top:128px" width="1072" height="713"><use href="#ph" x="0" y="0" width="1072" height="713"/></svg>
<div class="abs" style="left:318px;top:870px;width:29px;height:20px;background:linear-gradient(#e4e4e4,#b8b8b8 60%,#9c9c9c);border-radius:1px;box-shadow:0 0 0 1px #3a3a3a"></div>
<div class="abs" style="left:324px;top:875px;width:17px;height:10px;background:#5a5a5a;border:1px solid #1c1c1c;box-sizing:border-box"></div>
<div class="abs" style="left:356px;top:869px;width:33px;height:21px;background:linear-gradient(#8e8e8e,#7c7c7c);border:1px solid #2a2a2a;box-sizing:border-box;border-radius:1px"></div>
<div style="position:absolute;left:372px;top:870px;width:1px;height:19px;background:#555;"></div>
<span style="position:absolute;top:873.18px;font-size:14px;line-height:14px;height:14px;color:#2e2e2e;white-space:nowrap;left:359.50px;transform:scaleX(1.0708);transform-origin:0 50%;">Y</span>
<span style="position:absolute;top:873.18px;font-size:14px;line-height:14px;height:14px;color:#2e2e2e;white-space:nowrap;left:375.50px;transform:scaleX(1.0708);transform-origin:0 50%;">Y</span>
<svg class="abs" style="left:394px;top:878px" width="8" height="5"><path d="M0.5 0.5H7.5L4 4.5Z" fill="#8a8a8a"/></svg>
<div style="position:absolute;left:407px;top:866px;width:1px;height:28px;background:#3a3a3a;"></div>
<svg class="abs" style="left:417px;top:870px" width="42" height="20"><path d="M1.5 1V19" stroke="#3a3a3a" stroke-width="1.4"/><path d="M2 1.5H15V12H2Z" fill="#383838"/><path d="M25.5 1V19" stroke="#3a3a3a" stroke-width="1.4"/><path d="M26 1.5H39V12H26Z" fill="#383838"/><path d="M30 4.5l4 4M34 4.5l-4 4" stroke="#5a5a5a" stroke-width="1"/></svg>
<div style="position:absolute;left:465px;top:866px;width:1px;height:28px;background:#3a3a3a;"></div>
<div class="abs" style="left:475px;top:874px;width:12px;height:12px;background:#585858;border:1px solid #0e0e0e;box-sizing:border-box;box-shadow:0 1px 0 #5e5e5e"></div>
<span style="position:absolute;top:872.21px;font-size:16px;line-height:16px;height:16px;color:#b4b4b4;white-space:nowrap;left:494.00px;transform:scaleX(0.9240);transform-origin:0 50%;">Prova colore</span>
<div style="position:absolute;left:1576px;top:866px;width:1px;height:28px;background:#3a3a3a;"></div>
<svg class="abs" style="left:1586px;top:876px" width="15" height="9"><path d="M0.5 0.5H14.5L7.5 8Z" fill="#d0d0d0"/></svg>
<div style="position:absolute;left:1613px;top:112px;width:278px;height:788px;background:#292929;"></div>
<span style="position:absolute;top:119.19px;font-size:15px;line-height:15px;height:15px;color:#a8a8a8;white-space:nowrap;left:1790.00px;transform:scaleX(0.8966);transform-origin:0 50%;">Istogramma</span>
<svg class="abs" style="left:1872px;top:122px" width="11" height="11"><path d="M0.5 0.5H10.5L5.5 10Z" fill="#b4b4b4"/></svg>
<div class="abs" style="left:1618px;top:141px;width:268px;height:150px;background:#484848;border:1px solid #161616;box-sizing:border-box"></div>
<div class="abs" style="left:1626px;top:149px;width:252px;height:92px;background:#303030;border:1px solid #1c1c1c;box-sizing:border-box"></div>
<svg class="abs" style="left:1627px;top:150px" width="250" height="90" viewBox="1627 150 250 90"><rect x="1690" y="150" width="1" height="90" fill="#3a3a3a"/><rect x="1752" y="150" width="1" height="90" fill="#3a3a3a"/><rect x="1815" y="150" width="1" height="90" fill="#3a3a3a"/><polygon points="1634.6,240.1 1640.4,235.0 1646.1,231.1 1651.9,233.8 1660.0,233.4 1669.2,226.4 1676.1,221.1 1681.9,217.2 1686.5,218.1 1692.3,221.8 1701.5,224.6 1715.4,226.4 1724.6,225.7 1729.2,224.6 1738.4,227.4 1747.7,226.4 1753.4,220.0 1758.1,214.7 1761.5,220.0 1766.1,224.6 1771.9,215.4 1775.4,220.0 1784.6,224.6 1800.7,220.0 1804.2,208.4 1806.5,203.8 1808.8,208.4 1811.1,217.7 1815.7,222.3 1828.4,224.6 1830.7,192.3 1832.6,162.3 1833.7,150.3 1837.2,149.6 1839.0,169.2 1841.1,196.9 1842.7,224.6 1846.9,229.2 1853.8,230.4 1860.7,232.7 1865.3,238.4 1867.7,240.1" fill="#2e5fd2"/><polygon points="1666.9,240.1 1666.9,232.7 1673.8,229.2 1680.8,225.7 1687.7,222.3 1692.3,221.8 1696.9,225.7 1701.5,229.2 1708.4,232.7 1715.4,240.1" fill="#2fc3cc"/><polygon points="1844.6,240.1 1849.2,231.5 1856.1,235.0 1863.0,238.4 1865.3,240.1" fill="#2fc3cc"/><polygon points="1692.3,240.1 1692.3,222.3 1696.9,221.8 1701.5,223.4 1708.4,226.9 1715.4,229.2 1720.0,230.4 1743.1,229.2 1747.7,225.7 1750.0,228.1 1766.1,224.6 1769.6,213.1 1772.6,206.1 1774.9,210.8 1777.7,215.4 1781.1,220.0 1789.2,222.3 1796.1,210.8 1798.9,208.4 1801.9,215.4 1803.0,224.6 1819.2,210.8 1821.0,169.2 1822.7,157.7 1824.3,155.4 1825.7,169.2 1827.3,196.9 1828.4,215.4 1830.7,225.7 1831.9,240.1" fill="#30b73a"/><polygon points="1701.5,240.1 1701.5,225.7 1710.8,224.1 1720.0,225.7 1729.2,228.1 1738.4,229.2 1747.7,229.2 1780.0,220.0 1782.3,196.9 1784.6,179.6 1786.9,187.7 1789.2,196.9 1791.5,201.5 1795.0,210.8 1796.6,223.4 1808.8,223.4 1811.1,196.9 1812.3,187.7 1814.6,169.2 1816.9,161.8 1818.7,169.2 1819.7,196.9 1821.0,240.1" fill="#d22a3a"/><polygon points="1696.9,240.1 1696.9,225.7 1706.1,229.2 1715.4,232.7 1729.2,231.5 1738.4,229.2 1747.7,230.4 1770.7,232.7 1777.7,233.8 1784.6,224.6 1788.0,208.4 1790.4,201.5 1792.7,210.8 1796.1,220.0 1798.4,224.6 1813.4,220.0 1815.7,201.5 1818.0,187.7 1820.4,185.4 1822.0,196.9 1823.8,215.4 1825.0,224.6 1826.1,240.1" fill="#e8df30"/><polygon points="1752.3,240.1 1754.6,232.7 1759.2,229.2 1763.8,231.5 1766.1,240.1" fill="#d230c2"/><polygon points="1806.5,240.1 1807.7,224.6 1809.5,217.7 1811.1,215.4 1812.7,220.0 1814.1,240.1" fill="#d230c2"/><polygon points="1634.6,240.1 1646.1,238.4 1657.7,236.1 1669.2,233.8 1680.8,231.5 1692.3,226.9 1699.2,225.7 1708.4,230.4 1720.0,231.5 1733.8,229.2 1747.7,230.4 1761.5,232.7 1773.1,233.8 1784.6,229.2 1791.5,224.6 1800.7,225.7 1814.6,224.6 1828.4,225.7 1840.0,229.2 1849.2,231.5 1856.1,236.1 1865.3,240.1" fill="#b6b6b6"/></svg>
<svg class="abs" style="left:1627px;top:150px" width="16" height="14"><rect x="0.5" y="0.5" width="15" height="13" fill="#202020" stroke="#f0f0f0"/><path d="M3 11L8 3L13 11Z" fill="#4a4a4a"/></svg>
<svg class="abs" style="left:1861px;top:150px" width="16" height="14"><rect x="0.5" y="0.5" width="15" height="13" fill="#202020" stroke="#f0f0f0"/><path d="M3 11L8 3L13 11Z" fill="#4a4a4a"/></svg>
<span style="position:absolute;top:246.16px;font-size:12px;line-height:12px;height:12px;color:#9a9a9a;white-space:nowrap;left:1627.00px;transform:scaleX(0.8177);transform-origin:0 50%;">ISO 200</span>
<span style="position:absolute;top:246.16px;font-size:12px;line-height:12px;height:12px;color:#9a9a9a;white-space:nowrap;left:1705.00px;transform:scaleX(0.8725);transform-origin:0 50%;">70 mm</span>
<span style="position:absolute;top:246.16px;font-size:12px;line-height:12px;height:12px;color:#9a9a9a;white-space:nowrap;left:1770.00px;transform:scaleX(0.8994);transform-origin:0 50%;">ƒ / 9,0</span>
<span style="position:absolute;top:246.16px;font-size:12px;line-height:12px;height:12px;color:#9a9a9a;white-space:nowrap;left:1843.00px;transform:scaleX(0.8271);transform-origin:0 50%;">0,8 sec</span>
<div style="position:absolute;left:1620px;top:263px;width:264px;height:1px;background:#525252;"></div>
<div class="abs" style="left:1625px;top:273px;width:13px;height:9px;border:1px solid #8a8a8a;box-sizing:border-box"></div>
<span style="position:absolute;top:271.66px;font-size:12px;line-height:12px;height:12px;color:#a4a4a4;white-space:nowrap;left:1644.00px;transform:scaleX(1.0040);transform-origin:0 50%;">Foto originale</span>
<div class="abs" style="left:1618px;top:297px;width:268px;height:34px;background:linear-gradient(#4c4c4c,#444);border:1px solid #161616;box-sizing:border-box"></div>
<svg class="abs" style="left:1620px;top:299px" width="264" height="30" viewBox="1620 299 264 30" fill="none"><path d="M1630.500 309V304.500H1635M1638 304.500H1646M1649 304.500H1653.500V309M1653.500 312V318M1653.500 321V325.500H1649M1646 325.500H1638M1635 325.500H1630.500V321M1630.500 318V312" stroke="#1c1c1c" stroke-width="1.200"/><path d="M1634.500 308.500h15v13h-15z" stroke="#2c2c2c" stroke-dasharray="1 1"/><path d="M1639.500 308.500v13M1644.500 308.500v13M1634.500 313h15M1634.500 317h15" stroke="#2c2c2c" stroke-width=".9" stroke-dasharray="1 1"/><circle cx="1678" cy="314.5" r="10.3" stroke="#bdbdbd" stroke-width="1.3" fill="#4e4e4e"/><path d="M1688 314.5h5" stroke="#bdbdbd" stroke-width="1.2"/><path d="M1692 312l3 2.5l-3 2.5z" fill="#bdbdbd"/><circle cx="1714.5" cy="314.5" r="10.5" fill="#7a7a7a" stroke="#2e2e2e" stroke-width="1"/><circle cx="1714.5" cy="314.5" r="7" fill="#9a9a9a"/><circle cx="1714.5" cy="314.5" r="3.8" fill="#161616"/><rect x="1743.5" y="305.5" width="12" height="18" stroke="#1e1e1e" fill="#5a5a5a"/><path d="M1739 305.5h3M1757 305.5h3M1739 323.5h3M1757 323.5h3M1739 314.5h3M1757 314.5h3" stroke="#2a2a2a" stroke-dasharray="1 1"/><circle cx="1784.5" cy="314.5" r="10.3" stroke="#bdbdbd" stroke-width="1.2" fill="#505050"/><circle cx="1784.5" cy="314.5" r=".8" fill="#9a9a9a"/><circle cx="1819" cy="314.5" r="11" fill="#565656"/><path d="M1826 314.5H1874" stroke="#141414" stroke-width="3.2" stroke-linecap="round"/><path d="M1826 314.5H1873" stroke="#3a3a3a" stroke-width="1"/><path d="M1813 310.500c1.500-1.500 5-1 8 1l4 2v2l-4 2c-3 2-6.500 2.500-8 1c-1-2.500-1-5.500 0-8z" fill="#b4b4b4"/><path d="M1817 311l1 7M1820 312v5" stroke="#8a8a8a" stroke-width=".7"/></svg>
<div style="position:absolute;left:1613px;top:332px;width:278px;height:6px;background:#1e1e1e;"></div>
<div class="abs" style="left:1617px;top:338px;width:269px;height:63px;background:#484848;border:1px solid #040404;box-sizing:border-box"></div>
<div class="abs" style="left:1617px;top:400px;width:269px;height:89px;background:#484848;border:1px solid #040404;box-sizing:border-box"></div>
<div class="abs" style="left:1617px;top:518px;width:269px;height:334px;background:#484848;border:1px solid #040404;box-sizing:border-box"></div>
<div style="position:absolute;left:1618px;top:490px;width:267px;height:1px;background:#3a3a3a;"></div>
<div style="position:absolute;left:1618px;top:554px;width:267px;height:1px;background:#1a1a1a;"></div>
<div style="position:absolute;left:1618px;top:555px;width:267px;height:1px;background:#555;"></div>
<div style="position:absolute;left:1620px;top:590px;width:264px;height:1px;background:#565656;"></div>
<div style="position:absolute;left:1620px;top:642px;width:264px;height:1px;background:#565656;"></div>
<div style="position:absolute;left:1620px;top:711px;width:264px;height:1px;background:#565656;"></div>
<div style="position:absolute;left:1620px;top:781px;width:264px;height:1px;background:#565656;"></div>
<span style="position:absolute;top:341.64px;right:201.00px;font-size:11px;line-height:11px;height:11px;color:#6e6e6e;white-space:nowrap;transform:scaleX(1.04);transform-origin:100% 50%;text-shadow:0 1px 1px #2a2a2a;">Rotondità</span>
<svg class="abs" style="left:1722px;top:339.9px" width="110" height="16" viewBox="1722 339.9 110 16"><rect x="1733.25" y="342.4" width="1" height="2" fill="#565656"/><rect x="1742.00" y="342.4" width="1" height="2" fill="#565656"/><rect x="1750.75" y="342.4" width="1" height="2" fill="#565656"/><rect x="1759.50" y="342.4" width="1" height="2" fill="#565656"/><rect x="1768.25" y="342.4" width="1" height="2" fill="#565656"/><rect x="1777.00" y="342.4" width="1" height="2" fill="#565656"/><rect x="1785.75" y="342.4" width="1" height="2" fill="#565656"/><rect x="1794.50" y="342.4" width="1" height="2" fill="#565656"/><rect x="1803.25" y="342.4" width="1" height="2" fill="#565656"/><rect x="1812.00" y="342.4" width="1" height="2" fill="#565656"/><rect x="1820.75" y="342.4" width="1" height="2" fill="#565656"/><rect x="1727.3" y="345.79999999999995" width="99.4" height="4.200" rx="2.100" fill="#1e1e1e"/><rect x="1727.8" y="349.5" width="98.4" height="1" rx=".5" fill="#5c5c5c" opacity=".8"/><rect x="1728.8" y="347.0" width="96.4" height="1.400" rx=".7" fill="#363636"/><path d="M1777.00,342.7 C1778.20,345.09999999999997 1781.90,346.7 1781.90,350.09999999999997 C1781.90,352.09999999999997 1779.50,352.7 1777.00,352.7 C1774.50,352.7 1772.10,352.09999999999997 1772.10,350.09999999999997 C1772.10,346.7 1775.80,345.09999999999997 1777.00,342.7 Z" fill="url(#kgd)" stroke="#2c2c2c" stroke-width=".7"/></svg>
<span style="position:absolute;top:342.16px;right:49.00px;font-size:12px;line-height:12px;height:12px;color:#6e6e6e;white-space:nowrap;transform:scaleX(0.95);transform-origin:100% 50%;">0</span>
<span style="position:absolute;top:360.14px;right:201.00px;font-size:11px;line-height:11px;height:11px;color:#6e6e6e;white-space:nowrap;transform:scaleX(1.04);transform-origin:100% 50%;text-shadow:0 1px 1px #2a2a2a;">Sfumatura</span>
<svg class="abs" style="left:1722px;top:358.4px" width="110" height="16" viewBox="1722 358.4 110 16"><rect x="1733.25" y="360.9" width="1" height="2" fill="#565656"/><rect x="1742.00" y="360.9" width="1" height="2" fill="#565656"/><rect x="1750.75" y="360.9" width="1" height="2" fill="#565656"/><rect x="1759.50" y="360.9" width="1" height="2" fill="#565656"/><rect x="1768.25" y="360.9" width="1" height="2" fill="#565656"/><rect x="1777.00" y="360.9" width="1" height="2" fill="#565656"/><rect x="1785.75" y="360.9" width="1" height="2" fill="#565656"/><rect x="1794.50" y="360.9" width="1" height="2" fill="#565656"/><rect x="1803.25" y="360.9" width="1" height="2" fill="#565656"/><rect x="1812.00" y="360.9" width="1" height="2" fill="#565656"/><rect x="1820.75" y="360.9" width="1" height="2" fill="#565656"/><rect x="1727.3" y="364.29999999999995" width="99.4" height="4.200" rx="2.100" fill="#1e1e1e"/><rect x="1727.8" y="368.0" width="98.4" height="1" rx=".5" fill="#5c5c5c" opacity=".8"/><rect x="1728.8" y="365.5" width="96.4" height="1.400" rx=".7" fill="#363636"/><path d="M1777.00,361.2 C1778.20,363.59999999999997 1781.90,365.2 1781.90,368.59999999999997 C1781.90,370.59999999999997 1779.50,371.2 1777.00,371.2 C1774.50,371.2 1772.10,370.59999999999997 1772.10,368.59999999999997 C1772.10,365.2 1775.80,363.59999999999997 1777.00,361.2 Z" fill="url(#kgd)" stroke="#2c2c2c" stroke-width=".7"/></svg>
<span style="position:absolute;top:360.66px;right:49.00px;font-size:12px;line-height:12px;height:12px;color:#6e6e6e;white-space:nowrap;transform:scaleX(0.95);transform-origin:100% 50%;">50</span>
<span style="position:absolute;top:379.14px;right:201.00px;font-size:11px;line-height:11px;height:11px;color:#6e6e6e;white-space:nowrap;transform:scaleX(1.04);transform-origin:100% 50%;text-shadow:0 1px 1px #2a2a2a;">Luci</span>
<svg class="abs" style="left:1722px;top:377.4px" width="110" height="16" viewBox="1722 377.4 110 16"><rect x="1733.25" y="379.9" width="1" height="2" fill="#565656"/><rect x="1742.00" y="379.9" width="1" height="2" fill="#565656"/><rect x="1750.75" y="379.9" width="1" height="2" fill="#565656"/><rect x="1759.50" y="379.9" width="1" height="2" fill="#565656"/><rect x="1768.25" y="379.9" width="1" height="2" fill="#565656"/><rect x="1777.00" y="379.9" width="1" height="2" fill="#565656"/><rect x="1785.75" y="379.9" width="1" height="2" fill="#565656"/><rect x="1794.50" y="379.9" width="1" height="2" fill="#565656"/><rect x="1803.25" y="379.9" width="1" height="2" fill="#565656"/><rect x="1812.00" y="379.9" width="1" height="2" fill="#565656"/><rect x="1820.75" y="379.9" width="1" height="2" fill="#565656"/><rect x="1727.3" y="383.29999999999995" width="99.4" height="4.200" rx="2.100" fill="#1e1e1e"/><rect x="1727.8" y="387.0" width="98.4" height="1" rx=".5" fill="#5c5c5c" opacity=".8"/><rect x="1728.8" y="384.5" width="96.4" height="1.400" rx=".7" fill="#363636"/><path d="M1732.27,380.2 C1733.47,382.59999999999997 1737.17,384.2 1737.17,387.59999999999997 C1737.17,389.59999999999997 1734.77,390.2 1732.27,390.2 C1729.77,390.2 1727.37,389.59999999999997 1727.37,387.59999999999997 C1727.37,384.2 1731.07,382.59999999999997 1732.27,380.2 Z" fill="url(#kgd)" stroke="#2c2c2c" stroke-width=".7"/></svg>
<span style="position:absolute;top:379.66px;right:49.00px;font-size:12px;line-height:12px;height:12px;color:#6e6e6e;white-space:nowrap;transform:scaleX(0.95);transform-origin:100% 50%;">0</span>
<span style="position:absolute;top:410.14px;font-size:11px;line-height:11px;height:11px;color:#b0b0b0;white-space:nowrap;left:1726.50px;transform:scaleX(1.0556);transform-origin:0 50%;">Ripristina Granulosità</span>
<span style="position:absolute;top:430.14px;right:201.00px;font-size:11px;line-height:11px;height:11px;color:#b0b0b0;white-space:nowrap;transform:scaleX(1.04);transform-origin:100% 50%;text-shadow:0 1px 1px #2a2a2a;">Fattore</span>
<svg class="abs" style="left:1722px;top:428.4px" width="110" height="16" viewBox="1722 428.4 110 16"><rect x="1733.25" y="430.9" width="1" height="2" fill="#626262"/><rect x="1742.00" y="430.9" width="1" height="2" fill="#626262"/><rect x="1750.75" y="430.9" width="1" height="2" fill="#626262"/><rect x="1759.50" y="430.9" width="1" height="2" fill="#626262"/><rect x="1768.25" y="430.9" width="1" height="2" fill="#626262"/><rect x="1777.00" y="430.9" width="1" height="2" fill="#626262"/><rect x="1785.75" y="430.9" width="1" height="2" fill="#626262"/><rect x="1794.50" y="430.9" width="1" height="2" fill="#626262"/><rect x="1803.25" y="430.9" width="1" height="2" fill="#626262"/><rect x="1812.00" y="430.9" width="1" height="2" fill="#626262"/><rect x="1820.75" y="430.9" width="1" height="2" fill="#626262"/><rect x="1727.3" y="434.29999999999995" width="99.4" height="4.200" rx="2.100" fill="#1e1e1e"/><rect x="1727.8" y="438.0" width="98.4" height="1" rx=".5" fill="#5c5c5c" opacity=".8"/><rect x="1728.8" y="435.5" width="96.4" height="1.400" rx=".7" fill="#3c3c3c"/><path d="M1732.27,431.2 C1733.47,433.59999999999997 1737.17,435.2 1737.17,438.59999999999997 C1737.17,440.59999999999997 1734.77,441.2 1732.27,441.2 C1729.77,441.2 1727.37,440.59999999999997 1727.37,438.59999999999997 C1727.37,435.2 1731.07,433.59999999999997 1732.27,431.2 Z" fill="url(#kg)" stroke="#2c2c2c" stroke-width=".7"/></svg>
<span style="position:absolute;top:430.66px;right:49.00px;font-size:12px;line-height:12px;height:12px;color:#b0b0b0;white-space:nowrap;transform:scaleX(0.95);transform-origin:100% 50%;">0</span>
<span style="position:absolute;top:449.14px;right:201.00px;font-size:11px;line-height:11px;height:11px;color:#6e6e6e;white-space:nowrap;transform:scaleX(1.04);transform-origin:100% 50%;text-shadow:0 1px 1px #2a2a2a;">Dimensione</span>
<svg class="abs" style="left:1722px;top:447.4px" width="110" height="16" viewBox="1722 447.4 110 16"><rect x="1733.25" y="449.9" width="1" height="2" fill="#565656"/><rect x="1742.00" y="449.9" width="1" height="2" fill="#565656"/><rect x="1750.75" y="449.9" width="1" height="2" fill="#565656"/><rect x="1759.50" y="449.9" width="1" height="2" fill="#565656"/><rect x="1768.25" y="449.9" width="1" height="2" fill="#565656"/><rect x="1777.00" y="449.9" width="1" height="2" fill="#565656"/><rect x="1785.75" y="449.9" width="1" height="2" fill="#565656"/><rect x="1794.50" y="449.9" width="1" height="2" fill="#565656"/><rect x="1803.25" y="449.9" width="1" height="2" fill="#565656"/><rect x="1812.00" y="449.9" width="1" height="2" fill="#565656"/><rect x="1820.75" y="449.9" width="1" height="2" fill="#565656"/><rect x="1727.3" y="453.29999999999995" width="99.4" height="4.200" rx="2.100" fill="#1e1e1e"/><rect x="1727.8" y="457.0" width="98.4" height="1" rx=".5" fill="#5c5c5c" opacity=".8"/><rect x="1728.8" y="454.5" width="96.4" height="1.400" rx=".7" fill="#363636"/><path d="M1754.14,450.2 C1755.34,452.59999999999997 1759.04,454.2 1759.04,457.59999999999997 C1759.04,459.59999999999997 1756.64,460.2 1754.14,460.2 C1751.64,460.2 1749.24,459.59999999999997 1749.24,457.59999999999997 C1749.24,454.2 1752.94,452.59999999999997 1754.14,450.2 Z" fill="url(#kgd)" stroke="#2c2c2c" stroke-width=".7"/></svg>
<span style="position:absolute;top:449.66px;right:49.00px;font-size:12px;line-height:12px;height:12px;color:#6e6e6e;white-space:nowrap;transform:scaleX(0.95);transform-origin:100% 50%;">25</span>
<span style="position:absolute;top:468.14px;right:201.00px;font-size:11px;line-height:11px;height:11px;color:#6e6e6e;white-space:nowrap;transform:scaleX(1.04);transform-origin:100% 50%;text-shadow:0 1px 1px #2a2a2a;">Disturbo</span>
<svg class="abs" style="left:1722px;top:466.4px" width="110" height="16" viewBox="1722 466.4 110 16"><rect x="1733.25" y="468.9" width="1" height="2" fill="#565656"/><rect x="1742.00" y="468.9" width="1" height="2" fill="#565656"/><rect x="1750.75" y="468.9" width="1" height="2" fill="#565656"/><rect x="1759.50" y="468.9" width="1" height="2" fill="#565656"/><rect x="1768.25" y="468.9" width="1" height="2" fill="#565656"/><rect x="1777.00" y="468.9" width="1" height="2" fill="#565656"/><rect x="1785.75" y="468.9" width="1" height="2" fill="#565656"/><rect x="1794.50" y="468.9" width="1" height="2" fill="#565656"/><rect x="1803.25" y="468.9" width="1" height="2" fill="#565656"/><rect x="1812.00" y="468.9" width="1" height="2" fill="#565656"/><rect x="1820.75" y="468.9" width="1" height="2" fill="#565656"/><rect x="1727.3" y="472.29999999999995" width="99.4" height="4.200" rx="2.100" fill="#1e1e1e"/><rect x="1727.8" y="476.0" width="98.4" height="1" rx=".5" fill="#5c5c5c" opacity=".8"/><rect x="1728.8" y="473.5" width="96.4" height="1.400" rx=".7" fill="#363636"/><path d="M1777.00,469.2 C1778.20,471.59999999999997 1781.90,473.2 1781.90,476.59999999999997 C1781.90,478.59999999999997 1779.50,479.2 1777.00,479.2 C1774.50,479.2 1772.10,478.59999999999997 1772.10,476.59999999999997 C1772.10,473.2 1775.80,471.59999999999997 1777.00,469.2 Z" fill="url(#kgd)" stroke="#2c2c2c" stroke-width=".7"/></svg>
<span style="position:absolute;top:468.66px;right:49.00px;font-size:12px;line-height:12px;height:12px;color:#6e6e6e;white-space:nowrap;transform:scaleX(0.95);transform-origin:100% 50%;">50</span>
<div class="abs" style="left:1618px;top:497px;width:9px;height:14px;background:linear-gradient(#8a8a8a 0,#8a8a8a 45%,#3c3c3c 50%,#3c3c3c);border:1px solid #1a1a1a;box-sizing:border-box"></div>
<span style="position:absolute;top:498.19px;font-size:15px;line-height:15px;height:15px;color:#a8a8a8;white-space:nowrap;left:1715.00px;transform:scaleX(0.8887);transform-origin:0 50%;">Calibrazione fotocamera</span>
<svg class="abs" style="left:1872px;top:500px" width="11" height="11"><path d="M0.5 0.5H10.5L5.5 10Z" fill="#b4b4b4"/></svg>
<span style="position:absolute;top:531.14px;right:200.50px;font-size:11px;line-height:11px;height:11px;color:#b0b0b0;white-space:nowrap;transform:scaleX(1.04);transform-origin:100% 50%;">Elaborazione:</span>
<span style="position:absolute;top:531.14px;font-size:11px;line-height:11px;height:11px;color:#dcdcdc;white-space:nowrap;left:1762.00px;transform:scaleX(1.0238);transform-origin:0 50%;">2012 (corrente)</span>
<span style="position:absolute;top:566.64px;right:200.50px;font-size:11px;line-height:11px;height:11px;color:#b0b0b0;white-space:nowrap;transform:scaleX(1.04);transform-origin:100% 50%;">Profilo:</span>
<span style="position:absolute;top:566.64px;font-size:11px;line-height:11px;height:11px;color:#dcdcdc;white-space:nowrap;left:1754.50px;transform:scaleX(1.0627);transform-origin:0 50%;">Adobe Standard</span>
<svg class="abs" style="left:1842px;top:531px" width="7" height="10"><path d="M3.5 0.5L6.5 3.800H0.500ZM3.500 9.500L6.500 6.200H0.500Z" fill="#c0c0c0"/></svg>
<svg class="abs" style="left:1842px;top:567px" width="7" height="10"><path d="M3.5 0.5L6.5 3.800H0.500ZM3.500 9.500L6.500 6.200H0.500Z" fill="#c0c0c0"/></svg>
<svg width="0" height="0" style="position:absolute"><defs>
<linearGradient id="kg" x1="0" y1="0" x2="0" y2="1"><stop offset="0" stop-color="#dedede"/><stop offset=".55" stop-color="#c4c4c4"/><stop offset="1" stop-color="#8e8e8e"/></linearGradient><linearGradient id="kgd" x1="0" y1="0" x2="0" y2="1"><stop offset="0" stop-color="#8a8a8a"/><stop offset=".55" stop-color="#787878"/><stop offset="1" stop-color="#5e5e5e"/></linearGradient>
<linearGradient id="sgT"><stop offset="0" stop-color="#4fb44f"/><stop offset=".5" stop-color="#9a9a9a"/><stop offset="1" stop-color="#c050c8"/></linearGradient>
<linearGradient id="sgRH"><stop offset="0" stop-color="#d8407a"/><stop offset=".5" stop-color="#d84a3a"/><stop offset="1" stop-color="#d8983a"/></linearGradient>
<linearGradient id="sgRS"><stop offset="0" stop-color="#6a6a6a"/><stop offset="1" stop-color="#d8403a"/></linearGradient>
<linearGradient id="sgGH"><stop offset="0" stop-color="#c8d040"/><stop offset=".5" stop-color="#50c050"/><stop offset="1" stop-color="#40c0b0"/></linearGradient>
<linearGradient id="sgGS"><stop offset="0" stop-color="#6a6a6a"/><stop offset="1" stop-color="#58b848"/></linearGradient>
<linearGradient id="sgBH"><stop offset="0" stop-color="#40c090"/><stop offset=".5" stop-color="#4070d0"/><stop offset="1" stop-color="#7848c8"/></linearGradient>
<linearGradient id="sgBS"><stop offset="0" stop-color="#6a6a6a"/><stop offset="1" stop-color="#4890c8"/></linearGradient>
</defs></svg>
<span style="position:absolute;top:600.64px;font-size:11px;line-height:11px;height:11px;color:#b0b0b0;white-space:nowrap;left:1726.50px;transform:scaleX(1.0785);transform-origin:0 50%;">Ripristina Ombre</span>
<span style="position:absolute;top:619.64px;right:201.00px;font-size:11px;line-height:11px;height:11px;color:#b0b0b0;white-space:nowrap;transform:scaleX(1.04);transform-origin:100% 50%;text-shadow:0 1px 1px #2a2a2a;">Tinta</span>
<svg class="abs" style="left:1722px;top:617.9px" width="110" height="16" viewBox="1722 617.9 110 16"><rect x="1733.25" y="620.4" width="1" height="2" fill="#626262"/><rect x="1742.00" y="620.4" width="1" height="2" fill="#626262"/><rect x="1750.75" y="620.4" width="1" height="2" fill="#626262"/><rect x="1759.50" y="620.4" width="1" height="2" fill="#626262"/><rect x="1768.25" y="620.4" width="1" height="2" fill="#626262"/><rect x="1777.00" y="620.4" width="1" height="2" fill="#626262"/><rect x="1785.75" y="620.4" width="1" height="2" fill="#626262"/><rect x="1794.50" y="620.4" width="1" height="2" fill="#626262"/><rect x="1803.25" y="620.4" width="1" height="2" fill="#626262"/><rect x="1812.00" y="620.4" width="1" height="2" fill="#626262"/><rect x="1820.75" y="620.4" width="1" height="2" fill="#626262"/><rect x="1727.3" y="623.8" width="99.4" height="4.200" rx="2.100" fill="#1e1e1e"/><rect x="1727.8" y="627.5" width="98.4" height="1" rx=".5" fill="#5c5c5c" opacity=".8"/><rect x="1728.8" y="624.8" width="96.4" height="1.700" rx=".8" fill="url(#sgT)" opacity=".75"/><path d="M1777.00,620.6999999999999 C1778.20,623.1 1781.90,624.6999999999999 1781.90,628.1 C1781.90,630.1 1779.50,630.6999999999999 1777.00,630.6999999999999 C1774.50,630.6999999999999 1772.10,630.1 1772.10,628.1 C1772.10,624.6999999999999 1775.80,623.1 1777.00,620.6999999999999 Z" fill="url(#kg)" stroke="#2c2c2c" stroke-width=".7"/></svg>
<span style="position:absolute;top:620.16px;right:49.00px;font-size:12px;line-height:12px;height:12px;color:#b0b0b0;white-space:nowrap;transform:scaleX(0.95);transform-origin:100% 50%;">0</span>
<span style="position:absolute;top:651.64px;font-size:11px;line-height:11px;height:11px;color:#b0b0b0;white-space:nowrap;left:1726.50px;transform:scaleX(1.0621);transform-origin:0 50%;">Ripristina Rosso primario</span>
<span style="position:absolute;top:670.64px;right:201.00px;font-size:11px;line-height:11px;height:11px;color:#b0b0b0;white-space:nowrap;transform:scaleX(1.04);transform-origin:100% 50%;text-shadow:0 1px 1px #2a2a2a;">Tonalità</span>
<svg class="abs" style="left:1722px;top:668.9px" width="110" height="16" viewBox="1722 668.9 110 16"><rect x="1733.25" y="671.4" width="1" height="2" fill="#626262"/><rect x="1742.00" y="671.4" width="1" height="2" fill="#626262"/><rect x="1750.75" y="671.4" width="1" height="2" fill="#626262"/><rect x="1759.50" y="671.4" width="1" height="2" fill="#626262"/><rect x="1768.25" y="671.4" width="1" height="2" fill="#626262"/><rect x="1777.00" y="671.4" width="1" height="2" fill="#626262"/><rect x="1785.75" y="671.4" width="1" height="2" fill="#626262"/><rect x="1794.50" y="671.4" width="1" height="2" fill="#626262"/><rect x="1803.25" y="671.4" width="1" height="2" fill="#626262"/><rect x="1812.00" y="671.4" width="1" height="2" fill="#626262"/><rect x="1820.75" y="671.4" width="1" height="2" fill="#626262"/><rect x="1727.3" y="674.8" width="99.4" height="4.200" rx="2.100" fill="#1e1e1e"/><rect x="1727.8" y="678.5" width="98.4" height="1" rx=".5" fill="#5c5c5c" opacity=".8"/><rect x="1728.8" y="675.8" width="96.4" height="1.700" rx=".8" fill="url(#sgRH)" opacity=".75"/><path d="M1777.00,671.6999999999999 C1778.20,674.1 1781.90,675.6999999999999 1781.90,679.1 C1781.90,681.1 1779.50,681.6999999999999 1777.00,681.6999999999999 C1774.50,681.6999999999999 1772.10,681.1 1772.10,679.1 C1772.10,675.6999999999999 1775.80,674.1 1777.00,671.6999999999999 Z" fill="url(#kg)" stroke="#2c2c2c" stroke-width=".7"/></svg>
<span style="position:absolute;top:671.16px;right:49.00px;font-size:12px;line-height:12px;height:12px;color:#b0b0b0;white-space:nowrap;transform:scaleX(0.95);transform-origin:100% 50%;">0</span>
<span style="position:absolute;top:689.64px;right:201.00px;font-size:11px;line-height:11px;height:11px;color:#b0b0b0;white-space:nowrap;transform:scaleX(1.04);transform-origin:100% 50%;text-shadow:0 1px 1px #2a2a2a;">Saturazione</span>
<svg class="abs" style="left:1722px;top:687.9px" width="110" height="16" viewBox="1722 687.9 110 16"><rect x="1733.25" y="690.4" width="1" height="2" fill="#626262"/><rect x="1742.00" y="690.4" width="1" height="2" fill="#626262"/><rect x="1750.75" y="690.4" width="1" height="2" fill="#626262"/><rect x="1759.50" y="690.4" width="1" height="2" fill="#626262"/><rect x="1768.25" y="690.4" width="1" height="2" fill="#626262"/><rect x="1777.00" y="690.4" width="1" height="2" fill="#626262"/><rect x="1785.75" y="690.4" width="1" height="2" fill="#626262"/><rect x="1794.50" y="690.4" width="1" height="2" fill="#626262"/><rect x="1803.25" y="690.4" width="1" height="2" fill="#626262"/><rect x="1812.00" y="690.4" width="1" height="2" fill="#626262"/><rect x="1820.75" y="690.4" width="1" height="2" fill="#626262"/><rect x="1727.3" y="693.8" width="99.4" height="4.200" rx="2.100" fill="#1e1e1e"/><rect x="1727.8" y="697.5" width="98.4" height="1" rx=".5" fill="#5c5c5c" opacity=".8"/><rect x="1728.8" y="694.8" width="96.4" height="1.700" rx=".8" fill="url(#sgRS)" opacity=".75"/><path d="M1777.00,690.6999999999999 C1778.20,693.1 1781.90,694.6999999999999 1781.90,698.1 C1781.90,700.1 1779.50,700.6999999999999 1777.00,700.6999999999999 C1774.50,700.6999999999999 1772.10,700.1 1772.10,698.1 C1772.10,694.6999999999999 1775.80,693.1 1777.00,690.6999999999999 Z" fill="url(#kg)" stroke="#2c2c2c" stroke-width=".7"/></svg>
<span style="position:absolute;top:690.16px;right:49.00px;font-size:12px;line-height:12px;height:12px;color:#b0b0b0;white-space:nowrap;transform:scaleX(0.95);transform-origin:100% 50%;">0</span>
<span style="position:absolute;top:721.64px;font-size:11px;line-height:11px;height:11px;color:#b0b0b0;white-space:nowrap;left:1726.50px;transform:scaleX(1.0752);transform-origin:0 50%;">Ripristina Verde primario</span>
<span style="position:absolute;top:740.64px;right:201.00px;font-size:11px;line-height:11px;height:11px;color:#b0b0b0;white-space:nowrap;transform:scaleX(1.04);transform-origin:100% 50%;text-shadow:0 1px 1px #2a2a2a;">Tonalità</span>
<svg class="abs" style="left:1722px;top:738.9px" width="110" height="16" viewBox="1722 738.9 110 16"><rect x="1733.25" y="741.4" width="1" height="2" fill="#626262"/><rect x="1742.00" y="741.4" width="1" height="2" fill="#626262"/><rect x="1750.75" y="741.4" width="1" height="2" fill="#626262"/><rect x="1759.50" y="741.4" width="1" height="2" fill="#626262"/><rect x="1768.25" y="741.4" width="1" height="2" fill="#626262"/><rect x="1777.00" y="741.4" width="1" height="2" fill="#626262"/><rect x="1785.75" y="741.4" width="1" height="2" fill="#626262"/><rect x="1794.50" y="741.4" width="1" height="2" fill="#626262"/><rect x="1803.25" y="741.4" width="1" height="2" fill="#626262"/><rect x="1812.00" y="741.4" width="1" height="2" fill="#626262"/><rect x="1820.75" y="741.4" width="1" height="2" fill="#626262"/><rect x="1727.3" y="744.8" width="99.4" height="4.200" rx="2.100" fill="#1e1e1e"/><rect x="1727.8" y="748.5" width="98.4" height="1" rx=".5" fill="#5c5c5c" opacity=".8"/><rect x="1728.8" y="745.8" width="96.4" height="1.700" rx=".8" fill="url(#sgGH)" opacity=".75"/><path d="M1777.00,741.6999999999999 C1778.20,744.1 1781.90,745.6999999999999 1781.90,749.1 C1781.90,751.1 1779.50,751.6999999999999 1777.00,751.6999999999999 C1774.50,751.6999999999999 1772.10,751.1 1772.10,749.1 C1772.10,745.6999999999999 1775.80,744.1 1777.00,741.6999999999999 Z" fill="url(#kg)" stroke="#2c2c2c" stroke-width=".7"/></svg>
<span style="position:absolute;top:741.16px;right:49.00px;font-size:12px;line-height:12px;height:12px;color:#b0b0b0;white-space:nowrap;transform:scaleX(0.95);transform-origin:100% 50%;">0</span>
<span style="position:absolute;top:759.64px;right:201.00px;font-size:11px;line-height:11px;height:11px;color:#b0b0b0;white-space:nowrap;transform:scaleX(1.04);transform-origin:100% 50%;text-shadow:0 1px 1px #2a2a2a;">Saturazione</span>
<svg class="abs" style="left:1722px;top:757.9px" width="110" height="16" viewBox="1722 757.9 110 16"><rect x="1733.25" y="760.4" width="1" height="2" fill="#626262"/><rect x="1742.00" y="760.4" width="1" height="2" fill="#626262"/><rect x="1750.75" y="760.4" width="1" height="2" fill="#626262"/><rect x="1759.50" y="760.4" width="1" height="2" fill="#626262"/><rect x="1768.25" y="760.4" width="1" height="2" fill="#626262"/><rect x="1777.00" y="760.4" width="1" height="2" fill="#626262"/><rect x="1785.75" y="760.4" width="1" height="2" fill="#626262"/><rect x="1794.50" y="760.4" width="1" height="2" fill="#626262"/><rect x="1803.25" y="760.4" width="1" height="2" fill="#626262"/><rect x="1812.00" y="760.4" width="1" height="2" fill="#626262"/><rect x="1820.75" y="760.4" width="1" height="2" fill="#626262"/><rect x="1727.3" y="763.8" width="99.4" height="4.200" rx="2.100" fill="#1e1e1e"/><rect x="1727.8" y="767.5" width="98.4" height="1" rx=".5" fill="#5c5c5c" opacity=".8"/><rect x="1728.8" y="764.8" width="96.4" height="1.700" rx=".8" fill="url(#sgGS)" opacity=".75"/><path d="M1777.00,760.6999999999999 C1778.20,763.1 1781.90,764.6999999999999 1781.90,768.1 C1781.90,770.1 1779.50,770.6999999999999 1777.00,770.6999999999999 C1774.50,770.6999999999999 1772.10,770.1 1772.10,768.1 C1772.10,764.6999999999999 1775.80,763.1 1777.00,760.6999999999999 Z" fill="url(#kg)" stroke="#2c2c2c" stroke-width=".7"/></svg>
<span style="position:absolute;top:760.16px;right:49.00px;font-size:12px;line-height:12px;height:12px;color:#b0b0b0;white-space:nowrap;transform:scaleX(0.95);transform-origin:100% 50%;">0</span>
<span style="position:absolute;top:791.64px;font-size:11px;line-height:11px;height:11px;color:#b0b0b0;white-space:nowrap;left:1726.50px;transform:scaleX(1.0828);transform-origin:0 50%;">Ripristina Blu primario</span>
<span style="position:absolute;top:810.64px;right:201.00px;font-size:11px;line-height:11px;height:11px;color:#b0b0b0;white-space:nowrap;transform:scaleX(1.04);transform-origin:100% 50%;text-shadow:0 1px 1px #2a2a2a;">Tonalità</span>
<svg class="abs" style="left:1722px;top:808.9px" width="110" height="16" viewBox="1722 808.9 110 16"><rect x="1733.25" y="811.4" width="1" height="2" fill="#626262"/><rect x="1742.00" y="811.4" width="1" height="2" fill="#626262"/><rect x="1750.75" y="811.4" width="1" height="2" fill="#626262"/><rect x="1759.50" y="811.4" width="1" height="2" fill="#626262"/><rect x="1768.25" y="811.4" width="1" height="2" fill="#626262"/><rect x="1777.00" y="811.4" width="1" height="2" fill="#626262"/><rect x="1785.75" y="811.4" width="1" height="2" fill="#626262"/><rect x="1794.50" y="811.4" width="1" height="2" fill="#626262"/><rect x="1803.25" y="811.4" width="1" height="2" fill="#626262"/><rect x="1812.00" y="811.4" width="1" height="2" fill="#626262"/><rect x="1820.75" y="811.4" width="1" height="2" fill="#626262"/><rect x="1727.3" y="814.8" width="99.4" height="4.200" rx="2.100" fill="#1e1e1e"/><rect x="1727.8" y="818.5" width="98.4" height="1" rx=".5" fill="#5c5c5c" opacity=".8"/><rect x="1728.8" y="815.8" width="96.4" height="1.700" rx=".8" fill="url(#sgBH)" opacity=".75"/><path d="M1777.00,811.6999999999999 C1778.20,814.1 1781.90,815.6999999999999 1781.90,819.1 C1781.90,821.1 1779.50,821.6999999999999 1777.00,821.6999999999999 C1774.50,821.6999999999999 1772.10,821.1 1772.10,819.1 C1772.10,815.6999999999999 1775.80,814.1 1777.00,811.6999999999999 Z" fill="url(#kg)" stroke="#2c2c2c" stroke-width=".7"/></svg>
<span style="position:absolute;top:811.16px;right:49.00px;font-size:12px;line-height:12px;height:12px;color:#b0b0b0;white-space:nowrap;transform:scaleX(0.95);transform-origin:100% 50%;">0</span>
<span style="position:absolute;top:829.64px;right:201.00px;font-size:11px;line-height:11px;height:11px;color:#b0b0b0;white-space:nowrap;transform:scaleX(1.04);transform-origin:100% 50%;text-shadow:0 1px 1px #2a2a2a;">Saturazione</span>
<svg class="abs" style="left:1722px;top:827.9px" width="110" height="16" viewBox="1722 827.9 110 16"><rect x="1733.25" y="830.4" width="1" height="2" fill="#626262"/><rect x="1742.00" y="830.4" width="1" height="2" fill="#626262"/><rect x="1750.75" y="830.4" width="1" height="2" fill="#626262"/><rect x="1759.50" y="830.4" width="1" height="2" fill="#626262"/><rect x="1768.25" y="830.4" width="1" height="2" fill="#626262"/><rect x="1777.00" y="830.4" width="1" height="2" fill="#626262"/><rect x="1785.75" y="830.4" width="1" height="2" fill="#626262"/><rect x="1794.50" y="830.4" width="1" height="2" fill="#626262"/><rect x="1803.25" y="830.4" width="1" height="2" fill="#626262"/><rect x="1812.00" y="830.4" width="1" height="2" fill="#626262"/><rect x="1820.75" y="830.4" width="1" height="2" fill="#626262"/><rect x="1727.3" y="833.8" width="99.4" height="4.200" rx="2.100" fill="#1e1e1e"/><rect x="1727.8" y="837.5" width="98.4" height="1" rx=".5" fill="#5c5c5c" opacity=".8"/><rect x="1728.8" y="834.8" width="96.4" height="1.700" rx=".8" fill="url(#sgBS)" opacity=".75"/><path d="M1777.00,830.6999999999999 C1778.20,833.1 1781.90,834.6999999999999 1781.90,838.1 C1781.90,840.1 1779.50,840.6999999999999 1777.00,840.6999999999999 C1774.50,840.6999999999999 1772.10,840.1 1772.10,838.1 C1772.10,834.6999999999999 1775.80,833.1 1777.00,830.6999999999999 Z" fill="url(#kg)" stroke="#2c2c2c" stroke-width=".7"/></svg>
<span style="position:absolute;top:830.16px;right:49.00px;font-size:12px;line-height:12px;height:12px;color:#b0b0b0;white-space:nowrap;transform:scaleX(0.95);transform-origin:100% 50%;">0</span>
<div style="position:absolute;left:1618px;top:856px;width:268px;height:1px;background:#0e0e0e;"></div>
<div class="abs" style="left:1893px;top:750px;width:8px;height:105px;background:#bcbcbc;border-radius:4px"></div>
<div class="abs" style="left:1618px;top:866px;width:132px;height:27px;background:linear-gradient(#6a6a6a,#555 45%,#484848 50%,#404040);border:1px solid #1a1a1a;box-sizing:border-box;border-radius:2px;box-shadow:inset 0 1px 0 #7c7c7c"></div>
<div class="abs" style="left:1755px;top:866px;width:131px;height:27px;background:linear-gradient(#6a6a6a,#555 45%,#484848 50%,#404040);border:1px solid #1a1a1a;box-sizing:border-box;border-radius:2px;box-shadow:inset 0 1px 0 #7c7c7c"></div>
<span style="position:absolute;top:869.70px;font-size:15px;line-height:15px;height:15px;color:#b4b4b4;white-space:nowrap;left:1649.00px;transform:scaleX(0.8993);transform-origin:0 50%;">Precedente</span>
<span style="position:absolute;top:869.70px;font-size:15px;line-height:15px;height:15px;color:#b4b4b4;white-space:nowrap;left:1769.00px;transform:scaleX(0.8888);transform-origin:0 50%;">Imp. predefinite...</span>
<div class="abs" style="left:15px;top:909px;width:27px;height:16px;border:1px solid #e0e0e0;border-top-width:2px;box-sizing:border-box"></div>
<span style="position:absolute;top:911.67px;font-size:13px;line-height:13px;height:13px;color:#f0f0f0;white-space:nowrap;font-weight:bold;left:25.00px;transform:scaleX(0.8298);transform-origin:0 50%;">1</span>
<div class="abs" style="left:52px;top:909px;width:27px;height:16px;border:1px solid #7a7a7a;border-top-width:2px;box-sizing:border-box"></div>
<span style="position:absolute;top:911.67px;font-size:13px;line-height:13px;height:13px;color:#7a7a7a;white-space:nowrap;font-weight:bold;left:62.00px;transform:scaleX(0.9682);transform-origin:0 50%;">2</span>
<div style="position:absolute;left:89px;top:909px;width:1px;height:18px;background:repeating-linear-gradient(#4a4a4a 0,#4a4a4a 1px,transparent 1px,transparent 3px);"></div>
<div style="position:absolute;left:175px;top:909px;width:1px;height:18px;background:repeating-linear-gradient(#4a4a4a 0,#4a4a4a 1px,transparent 1px,transparent 3px);"></div>
<div style="position:absolute;left:1746px;top:909px;width:1px;height:18px;background:repeating-linear-gradient(#4a4a4a 0,#4a4a4a 1px,transparent 1px,transparent 3px);"></div>
<svg class="abs" style="left:100px;top:910px" width="16" height="16"><path d="M0 0h6.500v6.500h-6.500zM8.500 0h6.500v6.500h-6.500zM0 8.500h6.500v6.500h-6.500zM8.500 8.500h6.500v6.500h-6.500z" fill="#6e6e6e"/></svg>
<svg class="abs" style="left:126px;top:910px" width="40" height="16"><path d="M0.5 7.500L7.500 0.500V4.500H13.500V10.500H7.500V14.500Z" fill="#6e6e6e"/><path d="M38.500 7.500L31.500 0.500V4.500H25.500V10.500H31.500V14.500Z" fill="#6e6e6e"/></svg>
<span style="position:absolute;top:912.17px;font-size:13px;line-height:13px;height:13px;color:#8e8e8e;white-space:nowrap;left:186.00px;transform:scaleX(0.9293);transform-origin:0 50%;">Cartella : 2017-08-25</span>
<span style="position:absolute;top:912.17px;font-size:13px;line-height:13px;height:13px;color:#8e8e8e;white-space:nowrap;left:323.50px;transform:scaleX(0.9780);transform-origin:0 50%;">222 foto /1 selezionata /</span>
<span style="position:absolute;top:912.17px;font-size:13px;line-height:13px;height:13px;color:#f4f4f4;white-space:nowrap;left:460.00px;transform:scaleX(0.9208);transform-origin:0 50%;">LND_2539.NEF</span>
<svg class="abs" style="left:552px;top:914px" width="8" height="5"><path d="M0.3 0.3H7.700L4 4.700Z" fill="#9a9a9a"/></svg>
<span style="position:absolute;top:910.67px;font-size:13px;line-height:13px;height:13px;color:#a0a0a0;white-space:nowrap;left:1637.00px;transform:scaleX(0.9692);transform-origin:0 50%;">Filtro:</span>
<svg class="abs" style="left:1680px;top:905px" width="60" height="26" viewBox="1680 905 60 26" fill="none"><path d="M1690 909l7 7l-7 7l-7-7z" fill="#5a5a5a" stroke="#777" stroke-width=".8"/><path d="M1683 916l-2-1.500M1690 923l4 4" stroke="#777" stroke-width=".8"/><path d="M1709 909l7 7l-7 7l-7-7z" stroke="#3c3c3c" stroke-width=".9" stroke-dasharray="1.500 1.500"/><path d="M1728 909l7 7l-7 7l-7-7z" fill="#0a0a0a" stroke="#8a8a8a" stroke-width=".9"/><path d="M1721 916l-2-1.500M1728 923l4 4" stroke="#8a8a8a" stroke-width=".8"/></svg>
<div class="abs" style="left:1757px;top:911px;width:127px;height:15px;background:#2e2e2e;border:1px solid #585858;box-sizing:border-box;border-radius:1px"></div>
<span style="position:absolute;top:911.91px;font-size:12.5px;line-height:12.5px;height:12.5px;color:#8e8e8e;white-space:nowrap;left:1763.00px;transform:scaleX(0.9788);transform-origin:0 50%;">Nessun filtro</span>
<div style="position:absolute;left:1870px;top:912px;width:13px;height:13px;background:#222;"></div>
<svg class="abs" style="left:1873px;top:913px" width="7" height="11"><path d="M3.500 0.500L6.500 4H0.500ZM3.500 10.500L6.500 7H0.500Z" fill="#b0b0b0"/></svg>
<div class="abs" style="left:1894px;top:911px;width:10px;height:15px;background:linear-gradient(#2a2a2a 0,#2a2a2a 45%,#b0b0b0 50%,#b0b0b0 90%,#2a2a2a);border:1px solid #5a5a5a;box-sizing:border-box"></div>
<div class="abs" style="left:15px;top:933px;width:1889px;height:90px;border:1px solid #2d2d2d;box-sizing:border-box"></div>
<div class="abs" style="left:18px;top:936px;width:72px;height:72px;background:linear-gradient(#767676,#6a6a6a 60%,#606060);box-shadow:inset 1px 0 0 #7e7e7e,inset -1px 0 0 #4a4a4a;overflow:hidden"></div><div class="abs" style="left:90px;top:936px;width:72px;height:72px;background:linear-gradient(#767676,#6a6a6a 60%,#606060);box-shadow:inset 1px 0 0 #7e7e7e,inset -1px 0 0 #4a4a4a;overflow:hidden"></div><div class="abs" style="left:162px;top:936px;width:72px;height:72px;background:linear-gradient(#767676,#6a6a6a 60%,#606060);box-shadow:inset 1px 0 0 #7e7e7e,inset -1px 0 0 #4a4a4a;overflow:hidden"></div><div class="abs" style="left:234px;top:936px;width:72px;height:72px;background:linear-gradient(#767676,#6a6a6a 60%,#606060);box-shadow:inset 1px 0 0 #7e7e7e,inset -1px 0 0 #4a4a4a;overflow:hidden"></div><div class="abs" style="left:306px;top:936px;width:72px;height:72px;background:linear-gradient(#767676,#6a6a6a 60%,#606060);box-shadow:inset 1px 0 0 #7e7e7e,inset -1px 0 0 #4a4a4a;overflow:hidden"></div><div class="abs" style="left:378px;top:936px;width:72px;height:72px;background:#c8c8c8;box-shadow:inset 1px 0 0 #ddd,inset -1px 0 0 #aaa;overflow:hidden"></div><div class="abs" style="left:450px;top:936px;width:72px;height:72px;background:linear-gradient(#767676,#6a6a6a 60%,#606060);box-shadow:inset 1px 0 0 #7e7e7e,inset -1px 0 0 #4a4a4a;overflow:hidden"></div><div class="abs" style="left:522px;top:936px;width:72px;height:72px;background:linear-gradient(#767676,#6a6a6a 60%,#606060);box-shadow:inset 1px 0 0 #7e7e7e,inset -1px 0 0 #4a4a4a;overflow:hidden"></div><div class="abs" style="left:594px;top:936px;width:72px;height:72px;background:linear-gradient(#767676,#6a6a6a 60%,#606060);box-shadow:inset 1px 0 0 #7e7e7e,inset -1px 0 0 #4a4a4a;overflow:hidden"></div><div class="abs" style="left:666px;top:936px;width:72px;height:72px;background:linear-gradient(#767676,#6a6a6a 60%,#606060);box-shadow:inset 1px 0 0 #7e7e7e,inset -1px 0 0 #4a4a4a;overflow:hidden"></div><div class="abs" style="left:738px;top:936px;width:72px;height:72px;background:linear-gradient(#767676,#6a6a6a 60%,#606060);box-shadow:inset 1px 0 0 #7e7e7e,inset -1px 0 0 #4a4a4a;overflow:hidden"></div><div class="abs" style="left:810px;top:936px;width:72px;height:72px;background:linear-gradient(#767676,#6a6a6a 60%,#606060);box-shadow:inset 1px 0 0 #7e7e7e,inset -1px 0 0 #4a4a4a;overflow:hidden"></div><div class="abs" style="left:882px;top:936px;width:72px;height:72px;background:linear-gradient(#767676,#6a6a6a 60%,#606060);box-shadow:inset 1px 0 0 #7e7e7e,inset -1px 0 0 #4a4a4a;overflow:hidden"></div><div class="abs" style="left:954px;top:936px;width:72px;height:72px;background:linear-gradient(#767676,#6a6a6a 60%,#606060);box-shadow:inset 1px 0 0 #7e7e7e,inset -1px 0 0 #4a4a4a;overflow:hidden"></div><div class="abs" style="left:1026px;top:936px;width:72px;height:72px;background:linear-gradient(#767676,#6a6a6a 60%,#606060);box-shadow:inset 1px 0 0 #7e7e7e,inset -1px 0 0 #4a4a4a;overflow:hidden"></div><div class="abs" style="left:1098px;top:936px;width:72px;height:72px;background:linear-gradient(#767676,#6a6a6a 60%,#606060);box-shadow:inset 1px 0 0 #7e7e7e,inset -1px 0 0 #4a4a4a;overflow:hidden"></div><div class="abs" style="left:1170px;top:936px;width:72px;height:72px;background:linear-gradient(#767676,#6a6a6a 60%,#606060);box-shadow:inset 1px 0 0 #7e7e7e,inset -1px 0 0 #4a4a4a;overflow:hidden"></div><div class="abs" style="left:1242px;top:936px;width:72px;height:72px;background:linear-gradient(#767676,#6a6a6a 60%,#606060);box-shadow:inset 1px 0 0 #7e7e7e,inset -1px 0 0 #4a4a4a;overflow:hidden"></div><div class="abs" style="left:1314px;top:936px;width:72px;height:72px;background:linear-gradient(#767676,#6a6a6a 60%,#606060);box-shadow:inset 1px 0 0 #7e7e7e,inset -1px 0 0 #4a4a4a;overflow:hidden"></div><div class="abs" style="left:1386px;top:936px;width:72px;height:72px;background:linear-gradient(#767676,#6a6a6a 60%,#606060);box-shadow:inset 1px 0 0 #7e7e7e,inset -1px 0 0 #4a4a4a;overflow:hidden"></div><div class="abs" style="left:1458px;top:936px;width:72px;height:72px;background:linear-gradient(#767676,#6a6a6a 60%,#606060);box-shadow:inset 1px 0 0 #7e7e7e,inset -1px 0 0 #4a4a4a;overflow:hidden"></div><div class="abs" style="left:1530px;top:936px;width:72px;height:72px;background:linear-gradient(#767676,#6a6a6a 60%,#606060);box-shadow:inset 1px 0 0 #7e7e7e,inset -1px 0 0 #4a4a4a;overflow:hidden"></div><div class="abs" style="left:1602px;top:936px;width:72px;height:72px;background:linear-gradient(#767676,#6a6a6a 60%,#606060);box-shadow:inset 1px 0 0 #7e7e7e,inset -1px 0 0 #4a4a4a;overflow:hidden"></div><div class="abs" style="left:1674px;top:936px;width:72px;height:72px;background:linear-gradient(#767676,#6a6a6a 60%,#606060);box-shadow:inset 1px 0 0 #7e7e7e,inset -1px 0 0 #4a4a4a;overflow:hidden"></div><div class="abs" style="left:1746px;top:936px;width:72px;height:72px;background:linear-gradient(#767676,#6a6a6a 60%,#606060);box-shadow:inset 1px 0 0 #7e7e7e,inset -1px 0 0 #4a4a4a;overflow:hidden"></div><div class="abs" style="left:1818px;top:936px;width:72px;height:72px;background:linear-gradient(#767676,#6a6a6a 60%,#606060);box-shadow:inset 1px 0 0 #7e7e7e,inset -1px 0 0 #4a4a4a;overflow:hidden"></div><div class="abs" style="left:1890px;top:936px;width:12px;height:72px;background:linear-gradient(#767676,#6a6a6a 60%,#606060);box-shadow:inset 1px 0 0 #7e7e7e,inset -1px 0 0 #4a4a4a;overflow:hidden"></div>
<svg class="abs" style="left:24.0px;top:950.0px;filter:drop-shadow(0 1px 2px rgba(0,0,0,.45))" width="59" height="40" viewBox="0 0 59 40"><rect x="0" y="0" width="59" height="40" fill="#0a0a0a"/><svg x="1" y="1" width="57" height="38" viewBox="0 0 58 39" preserveAspectRatio="none"><rect x="0" y="0" width="58" height="13" fill="#c6cfdb"/><rect x="0" y="12" width="58" height="27" fill="#9db0b2"/><g filter="url(#tb)"><polygon points="0,20 14,15 30,17 44,14 50,18 44,26 40,39 0,39" fill="#e4e8ec" opacity="0.9"/><polygon points="0,26 20,24 30,30 10,39 0,39" fill="#f4f6f8" opacity="0.9"/></g><polygon points="58,6 48,7 42,9 40,12 46,13 52,16 58,18" fill="#8c7860"/><polygon points="50,16 54,15 58,17 58,39 42,39 46,30 50,22" fill="#b09682"/><polygon points="27,12 28,8 29,8 30,12" fill="#b09a78"/><polygon points="31,13 32,7 35,6 37,8 38,13" fill="#b8a07c"/><polygon points="38,11 39,8 42,8 43,12" fill="#b09672"/><polygon points="39,17 40,14 42,14 43,18" fill="#8a7a60"/><polygon points="26,23 30,21 35,22 38,23 30,24" fill="#4a4238"/></svg></svg>
<svg class="abs" style="left:96.0px;top:950.0px;filter:drop-shadow(0 1px 2px rgba(0,0,0,.45))" width="59" height="40" viewBox="0 0 59 40"><rect x="0" y="0" width="59" height="40" fill="#0a0a0a"/><svg x="1" y="1" width="57" height="38" viewBox="0 0 58 39" preserveAspectRatio="none"><rect x="0" y="0" width="58" height="13" fill="#8794a5"/><rect x="0" y="12" width="58" height="27" fill="#7d8d94"/><g filter="url(#tb)"><polygon points="0,22 12,19 26,22 36,20 42,22 40,30 36,39 0,39" fill="#b4c0c8" opacity="0.85"/><polygon points="0,30 16,28 30,33 34,39 0,39" fill="#c4ced6" opacity="0.8"/><polygon points="30,14 44,15 42,18 34,17" fill="#aab6be" opacity="0.6"/></g><polygon points="58,5 50,6 44,8 40,9 36,10 42,12 48,14 52,18 54,24 58,26" fill="#6c5e50"/><polygon points="40,9 50,6 58,5 58,8 50,9 44,11" fill="#6a6048"/><polygon points="50,18 53,22 54,26 58,28 58,39 37,39 40,32 46,25" fill="#8c7868"/><polygon points="17,16 17,10 19,10 20,16" fill="#968464"/><polygon points="25,17 26,8 28,7 30,9 31,17" fill="#a08e6c"/><polygon points="31,16 31,8 34,7 36,9 37,16" fill="#9a8868"/><polygon points="35,21 36,18 38,18 39,21" fill="#5a5246"/><polygon points="17,28 22,26 28,27 33,27 30,29 20,29" fill="#3c3834"/></svg></svg>
<svg class="abs" style="left:169.0px;top:950.0px;filter:drop-shadow(0 1px 2px rgba(0,0,0,.45))" width="59" height="40" viewBox="0 0 59 40"><rect x="0" y="0" width="59" height="40" fill="#0a0a0a"/><svg x="1" y="1" width="57" height="38" viewBox="0 0 58 39" preserveAspectRatio="none"><rect x="0" y="0" width="58" height="13" fill="#8794a5"/><rect x="0" y="12" width="58" height="27" fill="#7d8d94"/><g filter="url(#tb)"><polygon points="0,22 12,19 26,22 36,20 42,22 40,30 36,39 0,39" fill="#b4c0c8" opacity="0.85"/><polygon points="0,30 16,28 30,33 34,39 0,39" fill="#c4ced6" opacity="0.8"/><polygon points="30,14 44,15 42,18 34,17" fill="#aab6be" opacity="0.6"/></g><polygon points="58,5 50,6 44,8 40,9 36,10 42,12 48,14 52,18 54,24 58,26" fill="#6c5e50"/><polygon points="40,9 50,6 58,5 58,8 50,9 44,11" fill="#6a6048"/><polygon points="50,18 53,22 54,26 58,28 58,39 37,39 40,32 46,25" fill="#8c7868"/><polygon points="21,16 21,10 23,10 24,16" fill="#968464"/><polygon points="29,17 30,8 32,7 34,9 35,17" fill="#a08e6c"/><polygon points="35,16 35,8 38,7 40,9 41,16" fill="#9a8868"/><polygon points="39,21 40,18 42,18 43,21" fill="#5a5246"/><polygon points="21,28 26,26 32,27 37,27 34,29 24,29" fill="#3c3834"/></svg></svg>
<svg class="abs" style="left:241.0px;top:950.0px;filter:drop-shadow(0 1px 2px rgba(0,0,0,.45))" width="59" height="40" viewBox="0 0 59 40"><rect x="0" y="0" width="59" height="40" fill="#0a0a0a"/><svg x="1" y="1" width="57" height="38" viewBox="0 0 58 39" preserveAspectRatio="none"><rect x="0" y="0" width="58" height="13" fill="#8794a5"/><rect x="0" y="12" width="58" height="27" fill="#7d8d94"/><g filter="url(#tb)"><polygon points="0,22 12,19 26,22 36,20 42,22 40,30 36,39 0,39" fill="#b4c0c8" opacity="0.85"/><polygon points="0,30 16,28 30,33 34,39 0,39" fill="#c4ced6" opacity="0.8"/><polygon points="30,14 44,15 42,18 34,17" fill="#aab6be" opacity="0.6"/></g><polygon points="58,5 50,6 44,8 40,9 36,10 42,12 48,14 52,18 54,24 58,26" fill="#6c5e50"/><polygon points="40,9 50,6 58,5 58,8 50,9 44,11" fill="#6a6048"/><polygon points="50,18 53,22 54,26 58,28 58,39 37,39 40,32 46,25" fill="#8c7868"/><polygon points="20,16 20,10 22,10 23,16" fill="#968464"/><polygon points="28,17 29,8 31,7 33,9 34,17" fill="#a08e6c"/><polygon points="34,16 34,8 37,7 39,9 40,16" fill="#9a8868"/><polygon points="38,21 39,18 41,18 42,21" fill="#5a5246"/><polygon points="20,28 25,26 31,27 36,27 33,29 23,29" fill="#3c3834"/></svg></svg>
<svg class="abs" style="left:313.0px;top:950.0px;filter:drop-shadow(0 1px 2px rgba(0,0,0,.45))" width="59" height="40" viewBox="0 0 59 40"><rect x="0" y="0" width="59" height="40" fill="#0a0a0a"/><svg x="1" y="1" width="57" height="38" viewBox="0 0 58 39" preserveAspectRatio="none"><rect x="0" y="0" width="58" height="13" fill="#aab2bf"/><rect x="0" y="11" width="58" height="28" fill="#8c9a9f"/><g filter="url(#tb)"><polygon points="0,20 14,16 28,14 36,14 32,22 22,30 10,39 0,39" fill="#c8d0d6" opacity="0.8"/></g><polygon points="38,12 40,14 36,22 28,30 18,39 40,39 46,28" fill="#9c866c"/><polygon points="40,11 46,10 58,10 58,39 34,39 40,32 44,24 41,16" fill="#6c5c44"/><polygon points="40,11 46,10 58,10 58,13 46,13" fill="#5c6244"/><polygon points="44,28 58,22 58,39 36,39" fill="#4c5238"/><polygon points="27,13 28,11 29,11 30,13" fill="#8a7a5c"/><polygon points="31,13 31,10 33,10 34,13" fill="#8a7a5c"/></svg></svg>
<div class="abs" style="left:383.0px;top:948px;width:63px;height:44px;background:#e6e6e6"></div>
<svg class="abs" style="left:385.0px;top:950.0px;filter:drop-shadow(0 1px 2px rgba(0,0,0,.45))" width="59" height="40" viewBox="0 0 59 40"><rect x="0" y="0" width="59" height="40" fill="#0a0a0a"/><svg x="1" y="1" width="57" height="38" viewBox="0 0 58 39" preserveAspectRatio="none"><use href="#ph" x="0" y="0" width="58" height="39"/></svg></svg>
<svg class="abs" style="left:457.0px;top:950.0px;filter:drop-shadow(0 1px 2px rgba(0,0,0,.45))" width="59" height="40" viewBox="0 0 59 40"><rect x="0" y="0" width="59" height="40" fill="#0a0a0a"/><svg x="1" y="1" width="57" height="38" viewBox="0 0 58 39" preserveAspectRatio="none"><rect x="0" y="0" width="58" height="9" fill="#c9d0d9"/><rect x="0" y="7" width="58" height="32" fill="#8a9a9b"/><g filter="url(#tb)"><polygon points="0,14 12,12 26,15 34,20 30,30 14,36 0,34" fill="#c2cace" opacity="0.8"/><polygon points="0,24 14,22 24,28 10,33 0,32" fill="#d4dade" opacity="0.75"/></g><polygon points="8,8 14,6 30,6 44,5 58,5 58,14 50,13 40,12 28,11 16,10" fill="#7c6c54"/><polygon points="14,6 30,6 44,5 58,5 58,7 30,8" fill="#7a7450"/><polygon points="46,13 58,14 58,26 54,24 50,18" fill="#98846c"/><polygon points="50,13 58,10 58,22 54,18" fill="#867254"/><polygon points="36,26 36,12 37,9 46,8 48,10 48,26" fill="#8c7c60"/><polygon points="35,25 49,25 48,27 36,27" fill="#5a5040"/><polygon points="38,9 46,8 48,10 47,12 37,12" fill="#8a8458"/><polygon points="0,36 8,34 16,36 18,39 0,39" fill="#8a7a58"/></svg></svg>
<svg class="abs" style="left:529.0px;top:950.0px;filter:drop-shadow(0 1px 2px rgba(0,0,0,.45))" width="59" height="40" viewBox="0 0 59 40"><rect x="0" y="0" width="59" height="40" fill="#0a0a0a"/><svg x="1" y="1" width="57" height="38" viewBox="0 0 58 39" preserveAspectRatio="none"><rect x="0" y="0" width="58" height="9" fill="#c9d0d9"/><rect x="0" y="7" width="58" height="32" fill="#8a9a9b"/><g filter="url(#tb)"><polygon points="0,14 12,12 26,15 34,20 30,30 14,36 0,34" fill="#c2cace" opacity="0.8"/><polygon points="0,24 14,22 24,28 10,33 0,32" fill="#d4dade" opacity="0.75"/></g><polygon points="8,8 14,6 30,6 44,5 58,5 58,14 50,13 40,12 28,11 16,10" fill="#7c6c54"/><polygon points="14,6 30,6 44,5 58,5 58,7 30,8" fill="#7a7450"/><polygon points="46,13 58,14 58,26 54,24 50,18" fill="#98846c"/><polygon points="50,13 58,10 58,22 54,18" fill="#867254"/><polygon points="25,26 25,12 26,9 30,8 32,10 32,26" fill="#8c7c60"/><polygon points="24,25 33,25 32,27 25,27" fill="#5a5040"/><polygon points="27,9 30,8 32,10 31,12 26,12" fill="#8a8458"/><polygon points="0,28 6,27 14,30 24,33 34,32 44,33 58,29 58,39 0,39" fill="#5a5a40"/><polygon points="10,31 22,33 30,39 8,39" fill="#8a7a58" opacity="0.7"/><g filter="url(#tb)"><polygon points="0,30 10,32 6,39 0,39" fill="#4a5236"/><polygon points="40,34 58,30 58,39 38,39" fill="#4a5236"/></g></svg></svg>
<svg class="abs" style="left:600.0px;top:950.0px;filter:drop-shadow(0 1px 2px rgba(0,0,0,.45))" width="59" height="40" viewBox="0 0 59 40"><rect x="0" y="0" width="59" height="40" fill="#0a0a0a"/><svg x="1" y="1" width="57" height="38" viewBox="0 0 58 39" preserveAspectRatio="none"><rect x="0" y="0" width="58" height="9" fill="#b4bcc6"/><rect x="0" y="7" width="58" height="32" fill="#8a9a9b"/><g filter="url(#tb)"><polygon points="0,14 12,12 26,15 34,20 30,30 14,36 0,34" fill="#c2cace" opacity="0.8"/><polygon points="0,24 14,22 24,28 10,33 0,32" fill="#d4dade" opacity="0.75"/></g><polygon points="8,8 14,6 30,6 44,5 58,5 58,14 50,13 40,12 28,11 16,10" fill="#7c6c54"/><polygon points="14,6 30,6 44,5 58,5 58,7 30,8" fill="#7a7450"/><polygon points="46,13 58,14 58,26 54,24 50,18" fill="#98846c"/><polygon points="50,13 58,10 58,22 54,18" fill="#867254"/><polygon points="25,26 25,12 26,9 30,8 32,10 32,26" fill="#8c7c60"/><polygon points="24,25 33,25 32,27 25,27" fill="#5a5040"/><polygon points="27,9 30,8 32,10 31,12 26,12" fill="#8a8458"/><polygon points="0,28 6,27 14,30 24,33 34,32 44,33 58,29 58,39 0,39" fill="#5a5a40"/><polygon points="10,31 22,33 30,39 8,39" fill="#8a7a58" opacity="0.7"/><g filter="url(#tb)"><polygon points="0,30 10,32 6,39 0,39" fill="#4a5236"/><polygon points="40,34 58,30 58,39 38,39" fill="#4a5236"/></g></svg></svg>
<svg class="abs" style="left:672.0px;top:950.0px;filter:drop-shadow(0 1px 2px rgba(0,0,0,.45))" width="59" height="40" viewBox="0 0 59 40"><rect x="0" y="0" width="59" height="40" fill="#0a0a0a"/><svg x="1" y="1" width="57" height="38" viewBox="0 0 58 39" preserveAspectRatio="none"><rect x="0" y="0" width="58" height="9" fill="#b4bcc6"/><rect x="0" y="7" width="58" height="32" fill="#8a9a9b"/><g filter="url(#tb)"><polygon points="0,14 12,12 26,15 34,20 30,30 14,36 0,34" fill="#c2cace" opacity="0.8"/><polygon points="0,24 14,22 24,28 10,33 0,32" fill="#d4dade" opacity="0.75"/></g><polygon points="8,8 14,6 30,6 44,5 58,5 58,14 50,13 40,12 28,11 16,10" fill="#7c6c54"/><polygon points="14,6 30,6 44,5 58,5 58,7 30,8" fill="#7a7450"/><polygon points="46,13 58,14 58,26 54,24 50,18" fill="#98846c"/><polygon points="50,13 58,10 58,22 54,18" fill="#867254"/><polygon points="26,26 26,12 27,9 31,8 33,10 33,26" fill="#8c7c60"/><polygon points="25,25 34,25 33,27 26,27" fill="#5a5040"/><polygon points="28,9 31,8 33,10 32,12 27,12" fill="#8a8458"/><polygon points="0,28 6,27 14,30 24,33 34,32 44,33 58,29 58,39 0,39" fill="#5a5a40"/><polygon points="10,31 22,33 30,39 8,39" fill="#8a7a58" opacity="0.7"/><g filter="url(#tb)"><polygon points="0,30 10,32 6,39 0,39" fill="#4a5236"/><polygon points="40,34 58,30 58,39 38,39" fill="#4a5236"/></g></svg></svg>
<svg class="abs" style="left:744.0px;top:950.0px;filter:drop-shadow(0 1px 2px rgba(0,0,0,.45))" width="59" height="40" viewBox="0 0 59 40"><rect x="0" y="0" width="59" height="40" fill="#0a0a0a"/><svg x="1" y="1" width="57" height="38" viewBox="0 0 58 39" preserveAspectRatio="none"><rect x="0" y="0" width="58" height="9" fill="#c2cad5"/><rect x="0" y="7" width="58" height="32" fill="#9aaaa8"/><g filter="url(#tb)"><polygon points="0,16 14,13 30,15 36,22 34,32 20,39 0,39" fill="#d0d8dc" opacity="0.8"/><polygon points="0,26 16,24 26,30 18,36 0,36" fill="#e2e8ea" opacity="0.75"/></g><polygon points="12,8 20,6 40,6 58,4 58,12 44,11 30,10 18,10" fill="#8a7a5c"/><polygon points="36,31 36,12 38,7 42,5 50,5 54,8 55,20 54,31" fill="#907e60"/><polygon points="39,7 42,5 50,5 53,8 46,9" fill="#8a8656"/><polygon points="35,30 55,30 54,33 37,33" fill="#5e5442"/><polygon points="10,13 10,9 12,9 12,13" fill="#9a8866"/><polygon points="20,14 20,8 25,7 26,14" fill="#a8946c"/></svg></svg>
<svg class="abs" style="left:816.0px;top:950.0px;filter:drop-shadow(0 1px 2px rgba(0,0,0,.45))" width="59" height="40" viewBox="0 0 59 40"><rect x="0" y="0" width="59" height="40" fill="#0a0a0a"/><svg x="1" y="1" width="57" height="38" viewBox="0 0 58 39" preserveAspectRatio="none"><rect x="0" y="0" width="58" height="9" fill="#c2cad5"/><rect x="0" y="7" width="58" height="32" fill="#9aaaa8"/><g filter="url(#tb)"><polygon points="0,16 14,13 30,15 36,22 34,32 20,39 0,39" fill="#d0d8dc" opacity="0.8"/><polygon points="0,26 16,24 26,30 18,36 0,36" fill="#e2e8ea" opacity="0.75"/></g><polygon points="12,8 20,6 40,6 58,4 58,12 44,11 30,10 18,10" fill="#8a7a5c"/><polygon points="35,31 35,12 37,7 41,5 49,5 53,8 54,20 53,31" fill="#907e60"/><polygon points="38,7 41,5 49,5 52,8 45,9" fill="#8a8656"/><polygon points="34,30 54,30 53,33 36,33" fill="#5e5442"/><polygon points="9,13 9,9 11,9 11,13" fill="#9a8866"/><polygon points="19,14 19,8 24,7 25,14" fill="#a8946c"/></svg></svg>
<svg class="abs" style="left:888.0px;top:950.0px;filter:drop-shadow(0 1px 2px rgba(0,0,0,.45))" width="59" height="40" viewBox="0 0 59 40"><rect x="0" y="0" width="59" height="40" fill="#0a0a0a"/><svg x="1" y="1" width="57" height="38" viewBox="0 0 58 39" preserveAspectRatio="none"><rect x="0" y="0" width="58" height="13" fill="#697180"/><rect x="0" y="5" width="58" height="4" fill="#b0b6c0" opacity="0.8"/><rect x="0" y="11" width="58" height="28" fill="#6f7d80"/><g filter="url(#tb)"><polygon points="12,18 26,14 38,18 40,28 30,36 20,30" fill="#a4aeb2" opacity="0.6"/><rect x="0" y="1" width="40" height="3" fill="#8a909c" opacity="0.8"/></g><polygon points="26,13 36,11 44,11 58,10 58,14 40,15" fill="#857252"/><polygon points="36,22 36,12 40,10 48,10 56,11 58,12 58,39 52,39 54,28 50,18 44,17 43,22" fill="#8c7854"/><polygon points="44,17 50,18 54,28 52,36 50,26 46,20" fill="#a8946e"/><polygon points="0,15 4,16 10,22 18,30 26,39 0,39" fill="#4e4230"/><polygon points="0,15 4,16 10,22 8,26 0,24" fill="#75643f" opacity="0.8"/></svg></svg>
<svg class="abs" style="left:960.0px;top:950.0px;filter:drop-shadow(0 1px 2px rgba(0,0,0,.45))" width="59" height="40" viewBox="0 0 59 40"><rect x="0" y="0" width="59" height="40" fill="#0a0a0a"/><svg x="1" y="1" width="57" height="38" viewBox="0 0 58 39" preserveAspectRatio="none"><rect x="0" y="0" width="58" height="13" fill="#697180"/><rect x="0" y="5" width="58" height="4" fill="#b0b6c0" opacity="0.8"/><rect x="0" y="11" width="58" height="28" fill="#6f7d80"/><g filter="url(#tb)"><polygon points="12,18 26,14 38,18 40,28 30,36 20,30" fill="#a4aeb2" opacity="0.6"/><rect x="0" y="1" width="40" height="3" fill="#8a909c" opacity="0.8"/></g><polygon points="26,13 36,11 44,11 58,10 58,14 40,15" fill="#857252"/><polygon points="36,22 36,12 40,10 48,10 56,11 58,12 58,39 52,39 54,28 50,18 44,17 43,22" fill="#8c7854"/><polygon points="44,17 50,18 54,28 52,36 50,26 46,20" fill="#a8946e"/><polygon points="0,15 4,16 10,22 18,30 26,39 0,39" fill="#3e362a"/><polygon points="0,15 4,16 10,22 8,26 0,24" fill="#75643f" opacity="0.8"/></svg></svg>
<svg class="abs" style="left:1032.0px;top:950.0px;filter:drop-shadow(0 1px 2px rgba(0,0,0,.45))" width="59" height="40" viewBox="0 0 59 40"><rect x="0" y="0" width="59" height="40" fill="#0a0a0a"/><svg x="1" y="1" width="57" height="38" viewBox="0 0 58 39" preserveAspectRatio="none"><rect x="0" y="0" width="58" height="13" fill="#697180"/><rect x="0" y="5" width="58" height="4" fill="#b0b6c0" opacity="0.8"/><rect x="0" y="11" width="58" height="28" fill="#6f7d80"/><g filter="url(#tb)"><polygon points="12,18 26,14 38,18 40,28 30,36 20,30" fill="#a4aeb2" opacity="0.6"/><rect x="0" y="1" width="40" height="3" fill="#8a909c" opacity="0.8"/></g><polygon points="20,12 30,11 44,10 58,9 58,30 54,24 50,20 44,16 30,14" fill="#8a7654"/><polygon points="27,22 27,12 31,10 38,10 39,22" fill="#a48e66"/><polygon points="40,16 48,20 54,28 58,30 58,22 50,16" fill="#b8a280"/><polygon points="0,24 8,27 20,33 34,34 46,32 58,28 58,39 0,39" fill="#54503a"/></svg></svg>
<svg class="abs" style="left:1104.0px;top:950.0px;filter:drop-shadow(0 1px 2px rgba(0,0,0,.45))" width="59" height="40" viewBox="0 0 59 40"><rect x="0" y="0" width="59" height="40" fill="#0a0a0a"/><svg x="1" y="1" width="57" height="38" viewBox="0 0 58 39" preserveAspectRatio="none"><rect x="0" y="0" width="58" height="14" fill="#8c8c9a"/><rect x="0" y="0" width="58" height="5" fill="#9a9ca8"/><g filter="url(#tb)"><polygon points="0,10 18,11 28,13 0,14" fill="#c89a6c" opacity="0.9"/></g><rect x="0" y="12" width="58" height="27" fill="#7c8a8e"/><polygon points="0,12 8,13 12,16 14,24 10,30 0,36" fill="#5c4c38"/><polygon points="14,13 30,12 34,14 16,15" fill="#6a5c48"/><g filter="url(#tb)"><polygon points="0,32 8,28 14,30 6,39 0,39" fill="#b0bcc2" opacity="0.8"/><polygon points="20,20 40,18 44,22 24,24" fill="#a0acb2" opacity="0.6"/></g><polygon points="30,23 31,17 33,14 37,15 38,23" fill="#8c7a5a"/><polygon points="45,23 46,19 48,17 50,19 51,23" fill="#8c7a5a"/></svg></svg>
<svg class="abs" style="left:1176.0px;top:950.0px;filter:drop-shadow(0 1px 2px rgba(0,0,0,.45))" width="59" height="40" viewBox="0 0 59 40"><rect x="0" y="0" width="59" height="40" fill="#0a0a0a"/><svg x="1" y="1" width="57" height="38" viewBox="0 0 58 39" preserveAspectRatio="none"><rect x="0" y="0" width="58" height="14" fill="#8c8c9a"/><rect x="0" y="0" width="58" height="5" fill="#9a9ca8"/><g filter="url(#tb)"><polygon points="0,10 18,11 28,13 0,14" fill="#c89a6c" opacity="0.9"/></g><rect x="0" y="12" width="58" height="27" fill="#7c8a8e"/><polygon points="0,10 10,10 14,13 12,22 6,26 0,28" fill="#5c4c38"/><polygon points="10,10 24,9 34,11 14,13" fill="#6a5c48"/><g filter="url(#tb)"><polygon points="2,26 10,22 12,28 4,38 0,39" fill="#b0bcc2" opacity="0.8"/><polygon points="6,30 8,39 2,39" fill="#c8d0d4" opacity="0.8"/></g><polygon points="29,19 30,13 33,11 36,13 37,19" fill="#8c7a5a"/><polygon points="44,21 45,16 47,14 49,16 50,21" fill="#8c7a5a"/></svg></svg>
<svg class="abs" style="left:1248.0px;top:950.0px;filter:drop-shadow(0 1px 2px rgba(0,0,0,.45))" width="59" height="40" viewBox="0 0 59 40"><rect x="0" y="0" width="59" height="40" fill="#0a0a0a"/><svg x="1" y="1" width="57" height="38" viewBox="0 0 58 39" preserveAspectRatio="none"><rect x="0" y="0" width="58" height="20" fill="#a2a7b1"/><g filter="url(#tb)"><polygon points="0,11 20,13 40,10 58,12 58,16 30,17 0,15" fill="#d2d6dc" opacity="0.9"/><polygon points="0,0 58,0 58,6 30,8 0,5" fill="#8a909a" opacity="0.7"/></g><rect x="0" y="19" width="58" height="20" fill="#6c7a7e"/><g filter="url(#tb)"><polygon points="20,25 40,23 44,29 26,31" fill="#94a0a4" opacity="0.6"/></g><polygon points="33,22 44,20 58,19 58,24 40,24" fill="#68583e"/><polygon points="0,21 6,22 14,28 22,34 28,39 0,39" fill="#857238"/></svg></svg>
<svg class="abs" style="left:1321.0px;top:950.0px;filter:drop-shadow(0 1px 2px rgba(0,0,0,.45))" width="59" height="40" viewBox="0 0 59 40"><rect x="0" y="0" width="59" height="40" fill="#0a0a0a"/><svg x="1" y="1" width="57" height="38" viewBox="0 0 58 39" preserveAspectRatio="none"><rect x="0" y="0" width="58" height="21" fill="#a2a7b1"/><g filter="url(#tb)"><polygon points="0,12 20,14 40,11 58,13 58,17 30,18 0,16" fill="#d2d6dc" opacity="0.9"/><polygon points="0,0 58,0 58,6 30,8 0,5" fill="#8a909a" opacity="0.7"/></g><rect x="0" y="20" width="58" height="19" fill="#6c7a7e"/><g filter="url(#tb)"><polygon points="20,26 40,24 44,30 26,32" fill="#94a0a4" opacity="0.6"/></g><polygon points="33,22 40,21 44,20 58,19 58,24 55,23 54,32 45,32 45,24 38,24" fill="#6a5a40"/><polygon points="0,20 6,22 14,28 24,36 28,39 0,39" fill="#4c4232"/></svg></svg>
<svg class="abs" style="left:1393.0px;top:950.0px;filter:drop-shadow(0 1px 2px rgba(0,0,0,.45))" width="59" height="40" viewBox="0 0 59 40"><rect x="0" y="0" width="59" height="40" fill="#0a0a0a"/><svg x="1" y="1" width="57" height="38" viewBox="0 0 58 39" preserveAspectRatio="none"><rect x="0" y="0" width="58" height="22" fill="#a2a7b1"/><g filter="url(#tb)"><polygon points="0,13 20,15 40,12 58,14 58,18 30,19 0,17" fill="#d2d6dc" opacity="0.9"/><polygon points="0,0 58,0 58,6 30,8 0,5" fill="#8a909a" opacity="0.7"/></g><rect x="0" y="21" width="58" height="18" fill="#6c7a7e"/><g filter="url(#tb)"><polygon points="20,27 40,25 44,31 26,33" fill="#94a0a4" opacity="0.6"/></g><polygon points="33,22 40,21 44,20 58,19 58,24 55,23 54,32 45,32 45,24 38,24" fill="#6a5a40"/><polygon points="0,20 6,22 14,28 24,36 28,39 0,39" fill="#4c4232"/></svg></svg>
<svg class="abs" style="left:1465.0px;top:950.0px;filter:drop-shadow(0 1px 2px rgba(0,0,0,.45))" width="59" height="40" viewBox="0 0 59 40"><rect x="0" y="0" width="59" height="40" fill="#0a0a0a"/><svg x="1" y="1" width="57" height="38" viewBox="0 0 58 39" preserveAspectRatio="none"><rect x="0" y="0" width="58" height="20" fill="#a2a7b1"/><g filter="url(#tb)"><polygon points="0,11 20,13 40,10 58,12 58,16 30,17 0,15" fill="#d2d6dc" opacity="0.9"/><polygon points="0,0 58,0 58,6 30,8 0,5" fill="#8a909a" opacity="0.7"/></g><rect x="0" y="19" width="58" height="20" fill="#6c7a7e"/><g filter="url(#tb)"><polygon points="20,25 40,23 44,29 26,31" fill="#94a0a4" opacity="0.6"/></g><polygon points="30,22 38,21 44,20 58,19 58,24 54,23 53,31 44,31 44,24 36,24" fill="#6a5a40"/><polygon points="0,22 6,24 14,29 22,35 26,39 0,39" fill="#483e32"/></svg></svg>
<svg class="abs" style="left:1537.0px;top:950.0px;filter:drop-shadow(0 1px 2px rgba(0,0,0,.45))" width="59" height="40" viewBox="0 0 59 40"><rect x="0" y="0" width="59" height="40" fill="#0a0a0a"/><svg x="1" y="1" width="57" height="38" viewBox="0 0 58 39" preserveAspectRatio="none"><rect x="0" y="0" width="58" height="20" fill="#a2a7b1"/><g filter="url(#tb)"><polygon points="0,11 20,13 40,10 58,12 58,16 30,17 0,15" fill="#d2d6dc" opacity="0.9"/><polygon points="0,0 58,0 58,6 30,8 0,5" fill="#8a909a" opacity="0.7"/></g><rect x="0" y="19" width="58" height="20" fill="#6c7a7e"/><g filter="url(#tb)"><polygon points="20,25 40,23 44,29 26,31" fill="#94a0a4" opacity="0.6"/></g><polygon points="30,22 38,21 44,20 58,19 58,24 54,23 53,31 44,31 44,24 36,24" fill="#6a5a40"/><polygon points="0,22 6,24 14,29 22,35 26,39 0,39" fill="#483e32"/></svg></svg>
<svg class="abs" style="left:1608.0px;top:950.0px;filter:drop-shadow(0 1px 2px rgba(0,0,0,.45))" width="59" height="40" viewBox="0 0 59 40"><rect x="0" y="0" width="59" height="40" fill="#0a0a0a"/><svg x="1" y="1" width="57" height="38" viewBox="0 0 58 39" preserveAspectRatio="none"><rect x="0" y="0" width="58" height="12" fill="#a2a8b2"/><g filter="url(#tb)"><polygon points="0,5 30,7 58,4 58,9 30,10 0,9" fill="#d8dce2" opacity="0.9"/></g><rect x="0" y="10" width="58" height="29" fill="#75848a"/><g filter="url(#tb)"><polygon points="0,16 16,13 28,16 32,24 20,30 6,26" fill="#ccd4d8" opacity="0.8"/></g><polygon points="14,12 26,10 40,9 58,8 58,28 52,22 46,17 40,15 30,13" fill="#8c7856"/><polygon points="26,21 26,12 30,10 34,11 35,21" fill="#a8926a"/><polygon points="38,15 46,18 52,24 56,26 56,18 46,14" fill="#b8a27e"/><polygon points="0,26 8,29 18,34 30,35 40,33 40,39 0,39" fill="#54503a"/></svg></svg>
<svg class="abs" style="left:1681.0px;top:950.0px;filter:drop-shadow(0 1px 2px rgba(0,0,0,.45))" width="59" height="40" viewBox="0 0 59 40"><rect x="0" y="0" width="59" height="40" fill="#0a0a0a"/><svg x="1" y="1" width="57" height="38" viewBox="0 0 58 39" preserveAspectRatio="none"><rect x="0" y="0" width="58" height="20" fill="#a4a9b2"/><g filter="url(#tb)"><polygon points="0,10 20,12 40,9 58,11 58,15 30,17 0,15" fill="#dadde2" opacity="0.9"/><polygon points="0,0 58,0 58,6 0,6" fill="#9ea4ae" opacity="0.6"/></g><rect x="0" y="19" width="58" height="20" fill="#6e7c80"/><g filter="url(#tb)"><polygon points="0,30 20,26 40,28 58,30 58,39 0,39" fill="#a8b4b8" opacity="0.6"/></g><polygon points="24,21 34,20 44,19 58,19 58,30 54,28 53,24 48,23 48,31 41,31 41,23 30,23" fill="#6a5a40"/></svg></svg>
<svg class="abs" style="left:1753.0px;top:950.0px;filter:drop-shadow(0 1px 2px rgba(0,0,0,.45))" width="59" height="40" viewBox="0 0 59 40"><rect x="0" y="0" width="59" height="40" fill="#0a0a0a"/><svg x="1" y="1" width="57" height="38" viewBox="0 0 58 39" preserveAspectRatio="none"><rect x="0" y="0" width="58" height="14" fill="#b6bcc6"/><rect x="0" y="13" width="58" height="26" fill="#86959a"/><g filter="url(#tb)"><polygon points="4,26 14,22 24,24 30,30 18,36 8,39 4,34" fill="#ccd4d8" opacity="0.8"/></g><polygon points="0,13 6,13 10,15 11,22 8,25 0,26" fill="#a48e64"/><polygon points="10,14 24,13 26,15 11,16" fill="#8a7a58"/><polygon points="0,26 4,28 6,36 4,39 0,39" fill="#b4a080"/><polygon points="27,22 28,16 30,14 33,15 34,22" fill="#a08a62"/><polygon points="42,22 43,18 45,17 46,19 47,22" fill="#a08a62"/></svg></svg>
<svg class="abs" style="left:1825.0px;top:950.0px;filter:drop-shadow(0 1px 2px rgba(0,0,0,.45))" width="59" height="40" viewBox="0 0 59 40"><rect x="0" y="0" width="59" height="40" fill="#0a0a0a"/><svg x="1" y="1" width="57" height="38" viewBox="0 0 58 39" preserveAspectRatio="none"><rect x="0" y="0" width="58" height="16" fill="#bec3cb"/><rect x="0" y="15" width="58" height="24" fill="#8e9c9f"/><polygon points="14,15 24,14 34,15 20,17" fill="#9a8a66"/><polygon points="25,25 25,17 27,14 31,14 33,16 33,25" fill="#b09a6e"/><polygon points="0,28 6,27 12,30 16,36 14,39 0,39" fill="#a8903c"/><polygon points="4,32 10,31 14,36 12,39 4,39" fill="#7c7440"/><polygon points="34,39 36,31 42,27 52,27 58,30 58,39" fill="#2c7880"/><polygon points="40,30 44,27 50,27 54,31 50,36 42,35" fill="#9aa0a4"/><ellipse cx="45.5" cy="21" rx="5.500" ry="6.500" fill="#c89a82"/><path d="M39.500,21 C39,14 43,11.500 47,12 C51,12.500 52.500,16 51.500,21 C50,16 46,14.500 43,16 C41,17.500 40.500,19 39.500,21Z" fill="#6a4a32"/></svg></svg>

<div class="abs" style="left:1896px;top:950px;width:6px;height:40px;background:#1c1c1c"></div><div class="abs" style="left:1872px;top:936px;width:30px;height:72px;background:linear-gradient(90deg,rgba(0,0,0,0),rgba(0,0,0,.9))"></div>
<svg class="abs" style="left:67.5px;top:975px" width="14" height="14" viewBox="0 0 14 14"><rect x="0.5" y="0.5" width="13" height="13" fill="#1a1a1a" stroke="#e8e8e8"/><path d="M3 11L11 3V11Z" fill="#e8e8e8"/><path d="M2.500 4.500h4M4.500 2.500v4" stroke="#e8e8e8" stroke-width="1"/><path d="M7.500 9.500h3" stroke="#1a1a1a" stroke-width="1"/></svg>
<svg class="abs" style="left:428.5px;top:975px" width="14" height="14" viewBox="0 0 14 14"><rect x="0.5" y="0.5" width="13" height="13" fill="#1a1a1a" stroke="#e8e8e8"/><path d="M3 11L11 3V11Z" fill="#e8e8e8"/><path d="M2.500 4.500h4M4.500 2.500v4" stroke="#e8e8e8" stroke-width="1"/><path d="M7.500 9.500h3" stroke="#1a1a1a" stroke-width="1"/></svg>
<svg class="abs" style="left:1147.5px;top:975px" width="14" height="14" viewBox="0 0 14 14"><rect x="0.5" y="0.5" width="13" height="13" fill="#1a1a1a" stroke="#e8e8e8"/><rect x="3.500" y="4.500" width="7" height="5" fill="none" stroke="#e8e8e8"/><path d="M2 3h2M6 3h2M10 3h2M2 11h2M6 11h2M10 11h2" stroke="#e8e8e8" stroke-width="1"/></svg>
<svg class="abs" style="left:1219.5px;top:975px" width="14" height="14" viewBox="0 0 14 14"><rect x="0.5" y="0.5" width="13" height="13" fill="#1a1a1a" stroke="#e8e8e8"/><rect x="3.500" y="4.500" width="7" height="5" fill="none" stroke="#e8e8e8"/><path d="M2 3h2M6 3h2M10 3h2M2 11h2M6 11h2M10 11h2" stroke="#e8e8e8" stroke-width="1"/></svg>
<svg class="abs" style="left:1276.5px;top:975px" width="14" height="14" viewBox="0 0 14 14"><rect x="0.5" y="0.5" width="13" height="13" fill="#1a1a1a" stroke="#e8e8e8"/><rect x="3.500" y="4.500" width="7" height="5" fill="none" stroke="#e8e8e8"/><path d="M2 3h2M6 3h2M10 3h2M2 11h2M6 11h2M10 11h2" stroke="#e8e8e8" stroke-width="1"/></svg>
<svg class="abs" style="left:1291.5px;top:975px" width="14" height="14" viewBox="0 0 14 14"><rect x="0.5" y="0.5" width="13" height="13" fill="#1a1a1a" stroke="#e8e8e8"/><path d="M3 11L11 3V11Z" fill="#e8e8e8"/><path d="M2.500 4.500h4M4.500 2.500v4" stroke="#e8e8e8" stroke-width="1"/><path d="M7.500 9.500h3" stroke="#1a1a1a" stroke-width="1"/></svg>
<svg class="abs" style="left:1651.5px;top:975px" width="14" height="14" viewBox="0 0 14 14"><rect x="0.5" y="0.5" width="13" height="13" fill="#1a1a1a" stroke="#e8e8e8"/><rect x="3.500" y="4.500" width="7" height="5" fill="none" stroke="#e8e8e8"/><path d="M2 3h2M6 3h2M10 3h2M2 11h2M6 11h2M10 11h2" stroke="#e8e8e8" stroke-width="1"/></svg>
<div class="abs" style="left:18px;top:1011px;width:220px;height:8px;background:#7e7e7e;border-radius:4px"></div>
<svg class="abs" style="left:1908px;top:972px" width="8" height="12"><path d="M0.500 0.500L6.500 6L0.500 11.500Z" fill="#a0a0a0"/></svg>
</body></html>
